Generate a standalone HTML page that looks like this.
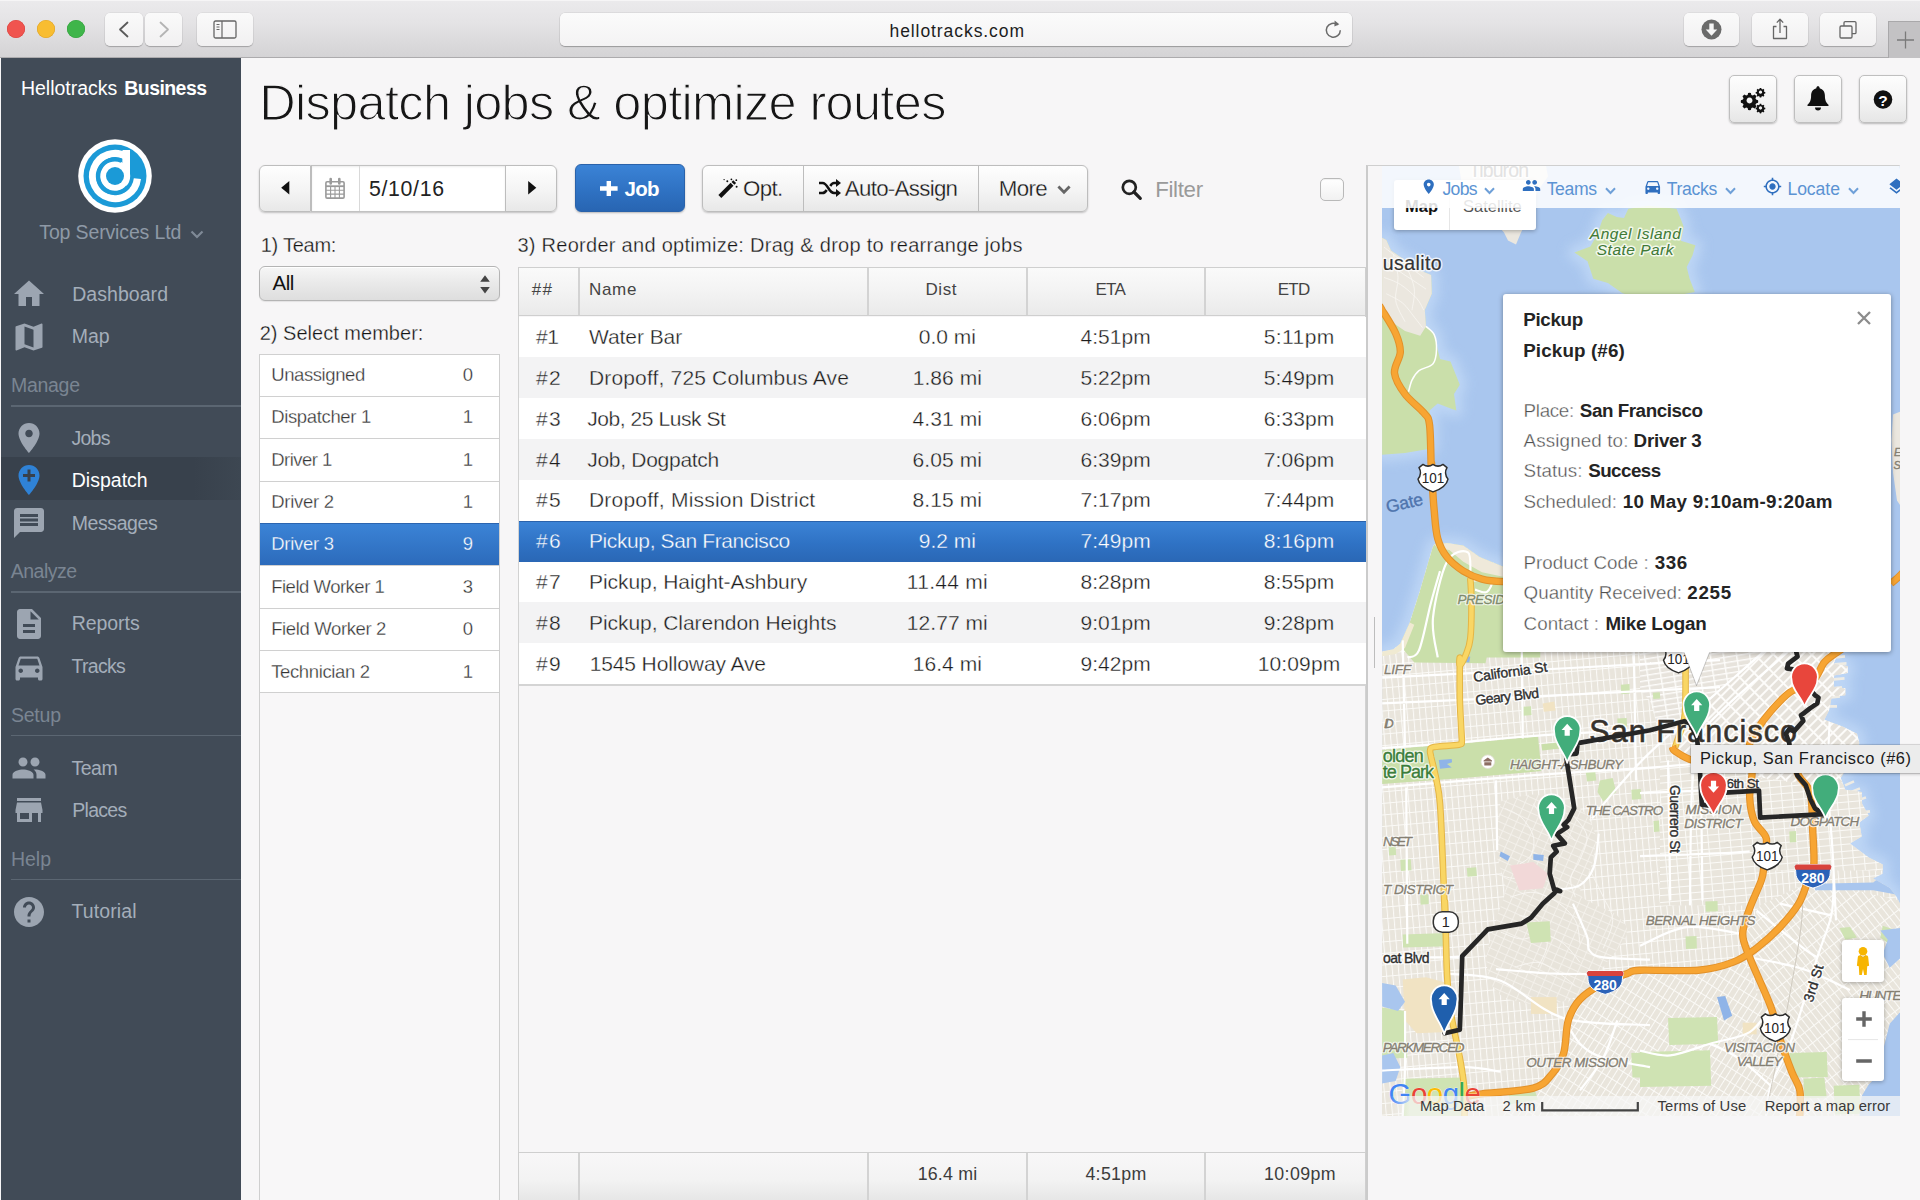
<!DOCTYPE html>
<html lang="en">
<head>
<meta charset="utf-8">
<title>Dispatch jobs &amp; optimize routes</title>
<style>
*{box-sizing:border-box;margin:0;padding:0}
html,body{width:1920px;height:1200px;overflow:hidden}
body{position:relative;background:#f7f6f7;font-family:"Liberation Sans",sans-serif;color:#333}
.abs{position:absolute}
.t{position:absolute;white-space:nowrap;line-height:1}
svg{display:block;overflow:visible}
#chrome{position:absolute;left:0;top:0;width:1920px;height:58px;background:linear-gradient(#ebeaec 0,#e4e3e5 40%,#d4d3d5 100%);border-bottom:1px solid #acabad;border-top:1px solid #f6f5f6}
.dot{position:absolute;top:18.5px;width:18.5px;height:18.5px;border-radius:50%}
.cbtn{position:absolute;top:12px;height:33px;border-radius:5px;background:linear-gradient(#fafafa,#f1f0f1);box-shadow:0 1px 1px rgba(0,0,0,.22),0 0 0 .5px rgba(0,0,0,.08)}
#url{position:absolute;left:560px;top:12px;width:792px;height:33px;border-radius:5px;background:linear-gradient(#fbfbfb,#f4f3f4);box-shadow:0 1px 1px rgba(0,0,0,.25),0 0 0 .5px rgba(0,0,0,.1)}
#plus{position:absolute;left:1888px;top:20px;width:32px;height:37px;background:#c3c2c4;border-left:1px solid #a9a8aa;border-top:1px solid #a9a8aa}
#side{position:absolute;left:1px;top:58px;width:240px;height:1142px;background:#414b57}
#side .ln{position:absolute;left:10px;width:230px;height:1.5px;background:#5b6672}
#side .ic{position:absolute;left:10px;width:36px;height:36px;fill:#9ca5b1}
#act{position:absolute;left:0;top:401px;width:240px;height:42.5px;background:linear-gradient(90deg,#38414c 0,#38414c 80%,#3d4752 100%)}
.btn{position:absolute;background:linear-gradient(#fefefe 0,#f4f4f4 55%,#e8e8e8 100%);border:1px solid #bdbdbd}
.grp{position:absolute;border-radius:6px;box-shadow:0 1px 2px rgba(0,0,0,.22)}
.sq{position:absolute;width:48px;height:48px;border-radius:5px;background:linear-gradient(#fdfdfd 0,#f3f3f3 55%,#e6e6e6 100%);border:1px solid #bfbfbf;box-shadow:0 1px 2px rgba(0,0,0,.25)}
.row{position:absolute;left:518.5px;width:847px;height:40.84px}
.mrow{position:absolute;left:0;width:239px;height:42.35px;border-top:1px solid #d0d0d0;background:#fff}
</style>
</head>
<body>


<div id="chrome">
  <div class="dot" style="left:6.5px;background:#f0544f;box-shadow:inset 0 0 0 .6px #d8433f"></div>
  <div class="dot" style="left:36.8px;background:#f8bd31;box-shadow:inset 0 0 0 .6px #dda228"></div>
  <div class="dot" style="left:66.8px;background:#3fb54a;box-shadow:inset 0 0 0 .6px #33a03c"></div>
  <div class="cbtn" style="left:104.5px;width:38.5px"><svg width="38" height="33" viewBox="0 0 38 33"><path d="M22.5 9.5 L15 16.5 L22.5 23.5" fill="none" stroke="#5a5a5a" stroke-width="1.8" stroke-linecap="round" stroke-linejoin="round"/></svg></div>
  <div class="cbtn" style="left:145px;width:37px"><svg width="37" height="33" viewBox="0 0 37 33"><path d="M15.5 9.5 L23 16.5 L15.5 23.5" fill="none" stroke="#b4b4b4" stroke-width="1.8" stroke-linecap="round" stroke-linejoin="round"/></svg></div>
  <div class="cbtn" style="left:197px;width:56px"><svg width="56" height="33" viewBox="0 0 56 33"><rect x="17" y="8" width="22" height="17" rx="1.5" fill="none" stroke="#666" stroke-width="1.3"/><path d="M25 8v17M19.5 11.5h3M19.5 14h3M19.5 16.5h3" stroke="#666" stroke-width="1.2" fill="none"/></svg></div>
  <div id="url">
    <div class="t" style="left:329.50px;top:10.34px;font-size:17.5px;letter-spacing:0.923px;color:#1d1d1d">hellotracks.com</div>
    <svg class="abs" style="left:762px;top:5px" width="24" height="24" viewBox="0 0 24 24"><path d="M18.3 12.2a7 7 0 1 1-2.6-5.4" fill="none" stroke="#6a6a6a" stroke-width="1.5"/><path d="M12.6 2.6 L17.3 6.2 L12.4 8.6z" fill="#6a6a6a"/></svg>
  </div>
  <div class="cbtn" style="left:1684px;width:55px"><svg width="55" height="33" viewBox="0 0 55 33"><circle cx="27.5" cy="16.5" r="10" fill="#6b6b6b"/><path d="M25.3 10.5h4.4v6h3.6l-5.8 6.2-5.8-6.2h3.6z" fill="#f6f6f6"/></svg></div>
  <div class="cbtn" style="left:1752px;width:56px"><svg width="56" height="33" viewBox="0 0 56 33"><path d="M24.5 13.5h-3v12h13v-12h-3M28 20V6.5M24.8 9.6L28 6.3l3.2 3.3" fill="none" stroke="#666" stroke-width="1.3" stroke-linejoin="round"/></svg></div>
  <div class="cbtn" style="left:1820px;width:56px"><svg width="56" height="33" viewBox="0 0 56 33"><rect x="20" y="13" width="12" height="12" rx="1.2" fill="none" stroke="#666" stroke-width="1.3"/><path d="M24 13v-3.2a1.2 1.2 0 0 1 1.2-1.2h9.600a1.2 1.2 0 0 1 1.2 1.2v9.600a1.2 1.2 0 0 1-1.2 1.2H32" fill="none" stroke="#666" stroke-width="1.3"/></svg></div>
  <div id="plus"><svg width="32" height="36" viewBox="0 0 32 36"><path d="M16.5 9.5v17M8 18h17" stroke="#7a7a7a" stroke-width="1.3" fill="none"/></svg></div>
</div>

<div id="side">
<div class="t" style="left:19.90px;top:20.94px;font-size:19.5px;letter-spacing:-0.005px;color:#fff">Hellotracks</div>
<div class="t" style="left:123.30px;top:20.94px;font-size:19.5px;letter-spacing:-0.572px;color:#fff;font-weight:bold">Business</div>
<svg class="abs" style="left:76.9px;top:81.3px" width="74" height="74" viewBox="-37 -37 74 74">
    <circle r="36.8" fill="#fff"/>
    <circle r="31.5" fill="#1b9ad7"/>
    <path d="M22.41 2.6 A22.5 22.5 0 1 1 11.3 -19.460 L11.3 1" fill="none" stroke="#fff" stroke-width="7.2" stroke-linejoin="miter"/>
    <circle r="15.2" fill="#fff"/>
    <path d="M6.6 -15.2 A16.8 16.8 0 1 0 12.870 10.800" fill="none" stroke="#1b9ad7" stroke-width="4.4"/>
    <path d="M7.500 -26 L15 -26 L15 2 L7.500 2z" fill="#fff"/>
    <circle r="9" fill="#1b9ad7"/>
  </svg>
<div class="t" style="left:38.30px;top:164.64px;font-size:19.5px;letter-spacing:-0.144px;color:#8e99a6">Top Services Ltd</div>
<svg class="abs" style="left:188.5px;top:171.5px" width="14" height="9" viewBox="0 0 14 9"><path d="M1.5 1.5 L7 7 L12.5 1.5" fill="none" stroke="#7f8a97" stroke-width="2.2"/></svg>
<div id="act" style="top:399.0px;height:43.2px"></div>
<div class="t" style="left:10.00px;top:318.14px;font-size:19.5px;letter-spacing:-0.294px;color:#7a8592">Manage</div>
<div class="ln" style="top:347.1px"></div>
<div class="t" style="left:9.70px;top:503.94px;font-size:19.5px;letter-spacing:-0.479px;color:#7a8592">Analyze</div>
<div class="ln" style="top:533.3px"></div>
<div class="t" style="left:10.00px;top:648.14px;font-size:19.5px;letter-spacing:-0.242px;color:#7a8592">Setup</div>
<div class="ln" style="top:676.8px"></div>
<div class="t" style="left:10.00px;top:791.64px;font-size:19.5px;letter-spacing:-0.036px;color:#7a8592">Help</div>
<div class="ln" style="top:820.8px"></div>
<svg class="ic" style="top:218.0px" viewBox="0 0 24 24"><path d="M10 20v-6h4v6h5v-8h3L12 3 2 12h3v8z"/></svg>
<div class="t" style="left:71.20px;top:227.34px;font-size:19.5px;letter-spacing:0.049px;color:#a4aeba">Dashboard</div>
<svg class="ic" style="top:260.5px" viewBox="0 0 24 24"><path d="M20.5 3l-.16.03L15 5.100 9 3 3.360 4.900c-.21.07-.36.25-.36.48V20.500c0 .28.22.5.5.5l.16-.03L9 18.900l6 2.100 5.640-1.900c.21-.07.36-.25.36-.48V3.500c0-.28-.22-.5-.5-.5zM15 19l-6-2.110V5l6 2.110V19z"/></svg>
<div class="t" style="left:70.70px;top:268.94px;font-size:19.5px;letter-spacing:0.031px;color:#a4aeba">Map</div>
<svg class="ic" style="top:362.0px" viewBox="0 0 24 24"><path d="M12 2C8.130 2 5 5.130 5 9c0 5.250 7 13 7 13s7-7.750 7-13c0-3.870-3.130-7-7-7zm0 9.500c-1.380 0-2.500-1.120-2.500-2.500s1.120-2.500 2.500-2.500 2.500 1.120 2.500 2.500-1.120 2.500-2.500 2.500z"/></svg>
<div class="t" style="left:70.40px;top:371.44px;font-size:19.5px;letter-spacing:-0.700px;color:#a4aeba">Jobs</div>
<svg class="ic" style="top:404.3px;fill:#2f82d6" viewBox="0 0 24 24"><path d="M12 2C8.140 2 5 5.140 5 9c0 5.250 7 13 7 13s7-7.750 7-13c0-3.860-3.140-7-7-7zm4 8h-3v3h-2v-3H8V8h3V5h2v3h3v2z"/></svg>
<div class="t" style="left:70.70px;top:413.14px;font-size:19.5px;letter-spacing:0.018px;color:#fff">Dispatch</div>
<svg class="ic" style="top:446.5px" viewBox="0 0 24 24"><path d="M20 2H4c-1.100 0-1.990.9-1.990 2L2 22l4-4h14c1.100 0 2-.9 2-2V4c0-1.100-.9-2-2-2zm-2 12H6v-2h12v2zm0-3H6V9h12v2zm0-3H6V6h12v2z"/></svg>
<div class="t" style="left:70.70px;top:455.64px;font-size:19.5px;letter-spacing:-0.411px;color:#a4aeba">Messages</div>
<svg class="ic" style="top:548.0px" viewBox="0 0 24 24"><path d="M14 2H6c-1.100 0-1.990.9-1.990 2L4 20c0 1.100.89 2 1.990 2H18c1.100 0 2-.9 2-2V8l-6-6zm2 16H8v-2h8v2zm0-4H8v-2h8v2zm-3-5V3.500L18.500 9H13z"/></svg>
<div class="t" style="left:70.70px;top:556.44px;font-size:19.5px;letter-spacing:-0.047px;color:#a4aeba">Reports</div>
<svg class="ic" style="top:590.5px" viewBox="0 0 24 24"><path d="M18.920 6.010C18.720 5.420 18.160 5 17.500 5h-11c-.66 0-1.210.42-1.420 1.010L3 12v8c0 .55.45 1 1 1h1c.55 0 1-.45 1-1v-1h12v1c0 .55.45 1 1 1h1c.55 0 1-.45 1-1v-8l-2.080-5.990zM6.500 16c-.83 0-1.500-.67-1.500-1.500S5.670 13 6.500 13s1.500.67 1.500 1.500S7.330 16 6.500 16zm11 0c-.83 0-1.500-.67-1.500-1.500s.67-1.500 1.500-1.500 1.500.67 1.500 1.500-.67 1.500-1.500 1.500zM5 11l1.500-4.500h11L19 11H5z"/></svg>
<div class="t" style="left:70.50px;top:599.39px;font-size:19.5px;letter-spacing:-0.700px;color:#a4aeba">Tracks</div>
<svg class="ic" style="top:692.0px" viewBox="0 0 24 24"><path d="M16 11c1.660 0 2.990-1.340 2.990-3S17.660 5 16 5c-1.660 0-3 1.340-3 3s1.340 3 3 3zm-8 0c1.660 0 2.990-1.340 2.990-3S9.660 5 8 5C6.340 5 5 6.340 5 8s1.340 3 3 3zm0 2c-2.330 0-7 1.170-7 3.500V19h14v-2.500c0-2.330-4.670-3.500-7-3.500zm8 0c-.29 0-.62.020-.97.050 1.160.84 1.970 1.970 1.970 3.450V19h6v-2.500c0-2.330-4.670-3.500-7-3.500z"/></svg>
<div class="t" style="left:70.50px;top:701.14px;font-size:19.5px;letter-spacing:-0.496px;color:#a4aeba">Team</div>
<svg class="ic" style="top:734.3px" viewBox="0 0 24 24"><path d="M20 4H4v2h16V4zm1 10v-2l-1-5H4l-1 5v2h1v6h10v-6h4v6h2v-6h1zm-9 4H6v-4h6v4z"/></svg>
<div class="t" style="left:71.20px;top:743.14px;font-size:19.5px;letter-spacing:-0.700px;color:#a4aeba">Places</div>
<svg class="ic" style="top:835.5px" viewBox="0 0 24 24"><path d="M12 2C6.480 2 2 6.480 2 12s4.480 10 10 10 10-4.480 10-10S17.520 2 12 2zm1 17h-2v-2h2v2zm2.070-7.750l-.9.920C13.450 12.900 13 13.500 13 15h-2v-.5c0-1.100.45-2.100 1.170-2.830l1.240-1.260c.37-.36.59-.86.590-1.410 0-1.100-.9-2-2-2s-2 .9-2 2H8c0-2.210 1.790-4 4-4s4 1.790 4 4c0 .88-.36 1.680-.93 2.250z"/></svg>
<div class="t" style="left:70.50px;top:844.39px;font-size:19.5px;letter-spacing:0.098px;color:#a4aeba">Tutorial</div>
</div>
<div class="t" style="left:259.20px;top:78.40px;font-size:50.5px;letter-spacing:-0.671px;color:#161616;-webkit-text-stroke:1.25px #f7f6f7">Dispatch jobs &amp; optimize routes</div>
<div class="sq" style="left:1729px;top:75.3px"><svg width="46" height="46" viewBox="0 0 46 46"><g fill="#111"><path id="gbig" d="M0-8.6l1.500.2.600 2.200 1.600.7 2-1.200 2.100 2.100-1.200 2 .7 1.600 2.200.600.200 1.500-.200 1.500-2.200.600-.7 1.600 1.200 2-2.100 2.100-2-1.200-1.600.7-.600 2.200-1.500.200-1.500-.200-.600-2.200-1.600-.7-2 1.200-2.100-2.100 1.200-2-.7-1.600-2.200-.600-.200-1.500.200-1.500 2.200-.600.700-1.600-1.200-2 2.100-2.100 2 1.200 1.600-.7.600-2.200zM0-3.300a3.300 3.300 0 1 0 .01 0z" transform="translate(19.500 24.500) scale(.9)" fill-rule="evenodd"/><path d="M0-8.6l1.500.2.600 2.200 1.600.7 2-1.200 2.100 2.100-1.200 2 .7 1.600 2.200.600.200 1.500-.200 1.500-2.200.600-.7 1.600 1.200 2-2.100 2.100-2-1.200-1.600.7-.600 2.200-1.500.200-1.500-.200-.600-2.200-1.600-.7-2 1.200-2.100-2.100 1.200-2-.7-1.600-2.200-.600-.200-1.500.200-1.500 2.200-.600.700-1.600-1.200-2 2.100-2.100 2 1.200 1.600-.7.600-2.200zM0-3.300a3.300 3.300 0 1 0 .01 0z" transform="translate(30.500 16.200) scale(.5)" fill-rule="evenodd"/><path d="M0-8.6l1.500.2.600 2.200 1.600.7 2-1.200 2.100 2.100-1.200 2 .7 1.600 2.200.600.200 1.500-.200 1.500-2.200.600-.7 1.600 1.200 2-2.100 2.100-2-1.200-1.600.7-.600 2.200-1.500.200-1.500-.200-.600-2.200-1.600-.7-2 1.200-2.100-2.100 1.200-2-.7-1.600-2.200-.600-.200-1.500.200-1.500 2.200-.600.700-1.600-1.200-2 2.100-2.100 2 1.200 1.600-.7.600-2.200zM0-3.300a3.300 3.300 0 1 0 .01 0z" transform="translate(30.500 32) scale(.5)" fill-rule="evenodd"/></g></svg></div>
<div class="sq" style="left:1794px;top:75.3px"><svg width="46" height="46" viewBox="0 0 46 46"><path d="M23 10.200c.9 0 1.600.7 1.600 1.600v.5c3.300.8 5.300 3.600 5.300 7.200 0 4.800 1.300 7.200 3.600 9.200v1.300H12.500v-1.300c2.300-2 3.600-4.400 3.600-9.200 0-3.600 2-6.400 5.300-7.200v-.5c0-.9.700-1.600 1.600-1.600zM20 31.500h6a3 3 0 0 1-6 0z" fill="#111"/></svg></div>
<div class="sq" style="left:1859px;top:75.3px"><svg width="46" height="46" viewBox="0 0 46 46"><circle cx="23" cy="23.500" r="9.300" fill="#111"/></svg><div class="t" style="left:23.00px;top:16.33px;font-size:15.5px;color:#fff;font-weight:bold;transform:translateX(-50%);">?</div></div>
<div class="grp" style="left:259.2px;top:164.7px;width:298.3px;height:47px;background:#fff"></div>
<div class="btn" style="left:259.2px;top:164.7px;width:52.1px;height:47px;border-radius:6px 0 0 6px"></div>
<div class="abs" style="left:310.8px;top:164.7px;width:195.500px;height:47px;background:#fff;border:1px solid #c2c2c2;border-left:1px solid #bdbdbd;box-shadow:inset 0 1px 2px rgba(0,0,0,.08)"></div>
<div class="abs" style="left:358.7px;top:165.7px;width:1px;height:45px;background:#d9d9d9"></div>
<div class="btn" style="left:505.3px;top:164.7px;width:52.2px;height:47px;border-radius:0 6px 6px 0"></div>
<svg class="abs" style="left:281.3px;top:181.4px" width="8.500" height="14" viewBox="0 0 8.500 14"><path d="M8.300 0v13.600L.2 6.800z" fill="#111"/></svg>
<svg class="abs" style="left:527.7px;top:181.4px" width="8.500" height="14" viewBox="0 0 8.500 14"><path d="M.2 0v13.600L8.300 6.800z" fill="#111"/></svg>
<svg class="abs" style="left:325px;top:177.5px" width="20" height="21" viewBox="0 0 20 21"><g fill="none" stroke="#9a9a9a"><rect x=".9" y="3.700" width="18.200" height="16.400" rx="1.200" stroke-width="1.600"/><path d="M1 8.200h18" stroke-width="1.800"/><path d="M1 12.200h18M1 16.100h18M5.600 8.200v12M10 8.200v12M14.400 8.200v12" stroke-width="1.100"/><path d="M5.700 1v4.500M14.300 1v4.500" stroke-width="2.600" stroke-linecap="round"/></g></svg>
<div class="t" style="left:369.00px;top:178.82px;font-size:21.3px;letter-spacing:0.656px;color:#222">5/10/16</div>
<div class="abs" style="left:574.6px;top:164.2px;width:110.1px;height:48.2px;border-radius:6px;background:linear-gradient(#3b83d6 0,#2f72c3 55%,#2865b2 100%);border:1px solid #2a62aa;box-shadow:0 1px 2px rgba(0,0,0,.25)"></div>
<svg class="abs" style="left:600.4px;top:180.800px" width="17.600" height="15" viewBox="0 0 17.600 15"><path d="M6.600 0h4.400v5.300h6.600v4.400H11V15H6.600V9.700H0V5.300h6.600z" fill="#fff"/></svg>
<div class="t" style="left:624.50px;top:179.20px;font-size:20.5px;letter-spacing:-0.700px;color:#fff;font-weight:bold">Job</div>
<div class="grp" style="left:701.7px;top:164.5px;width:386.7px;height:47.5px"></div>
<div class="btn" style="left:701.7px;top:164.5px;width:102px;height:47.5px;border-radius:6px 0 0 6px"></div>
<div class="btn" style="left:802.7px;top:164.5px;width:176.500px;height:47.5px"></div>
<div class="btn" style="left:978.2px;top:164.5px;width:110.2px;height:47.5px;border-radius:0 6px 6px 0"></div>
<svg class="abs" style="left:717.5px;top:177.5px" width="20" height="20" viewBox="0 0 20 20"><g fill="#111"><path d="M.4 17L12.600 4.800l2.900 2.900L3.300 19.900z"/><path d="M13.500 3.900l1.700-1.700 2.900 2.900-1.700 1.700z"/><circle cx="9.300" cy="3.200" r="1"/><circle cx="13.400" cy="1.300" r=".9"/><circle cx="18.300" cy="2.200" r=".9"/><circle cx="18.600" cy="8.700" r="1"/><circle cx="6.100" cy="1.600" r=".7"/></g></svg>
<div class="t" style="left:743.10px;top:177.67px;font-size:22.3px;letter-spacing:-0.700px;color:#141414;-webkit-text-stroke:.3px #f5f5f5">Opt.</div>
<svg class="abs" style="left:819px;top:178.5px" width="22" height="18" viewBox="0 0 22 18"><g fill="none" stroke="#111" stroke-width="2.500"><path d="M0 4h3.500c5.500 0 6 10 11.500 10H18"/><path d="M0 14h3.500c2 0 3.200-1.300 4.200-3M11.300 7c1-1.700 2.200-3 3.700-3H18"/></g><path d="M17 0l5 4-5 4zM17 10l5 4-5 4z" fill="#111"/></svg>
<div class="t" style="left:844.80px;top:177.67px;font-size:22.3px;letter-spacing:-0.700px;color:#141414;-webkit-text-stroke:.3px #f5f5f5">Auto-Assign</div>
<div class="t" style="left:998.70px;top:177.67px;font-size:22.3px;letter-spacing:-0.604px;color:#141414;-webkit-text-stroke:.3px #f5f5f5">More</div>
<svg class="abs" style="left:1056.5px;top:184.5px" width="14" height="10" viewBox="0 0 14 10"><path d="M1.400 1.600L7 7.300l5.600-5.700" fill="none" stroke="#666" stroke-width="2.800"/></svg>
<svg class="abs" style="left:1121px;top:179px" width="21" height="21" viewBox="0 0 21 21"><circle cx="8.300" cy="8.300" r="6.500" fill="none" stroke="#222" stroke-width="2.700"/><path d="M13 13l6.300 6.300" stroke="#222" stroke-width="3.200" stroke-linecap="round"/></svg>
<div class="t" style="left:1155.20px;top:178.57px;font-size:22.3px;letter-spacing:-0.332px;color:#9a9a9a">Filter</div>
<div class="abs" style="left:1320px;top:177.5px;width:23.5px;height:23px;border-radius:5px;border:1px solid #b9b9b9;background:linear-gradient(#fff,#f1f1f1);box-shadow:inset 0 1px 1px rgba(0,0,0,.06)"></div>
<div class="t" style="left:260.70px;top:235.22px;font-size:20px;letter-spacing:-0.250px;color:#141414;-webkit-text-stroke:.3px #f7f6f7">1) Team:</div>
<div class="t" style="left:517.40px;top:235.22px;font-size:20px;letter-spacing:0.278px;color:#141414;-webkit-text-stroke:.3px #f7f6f7">3) Reorder and optimize: Drag &amp; drop to rearrange jobs</div>
<div class="t" style="left:259.70px;top:322.52px;font-size:20px;letter-spacing:0.019px;color:#141414;-webkit-text-stroke:.3px #f7f6f7">2) Select member:</div>
<div class="abs" style="left:259px;top:266px;width:240.600px;height:35px;border-radius:6px;border:1px solid #b4b4b4;background:linear-gradient(#f6f6f6 0,#e9e9e9 50%,#dedede 100%);box-shadow:inset 0 1px 0 #fff,0 1px 1px rgba(0,0,0,.08)"></div>
<div class="t" style="left:272.50px;top:273.40px;font-size:20.5px;letter-spacing:-0.498px;color:#111">All</div>
<svg class="abs" style="left:479.5px;top:274.5px" width="10" height="19" viewBox="0 0 10 19"><path d="M5 .3l4.800 6.500H.2zM5 18.500l4.800-6.500H.2z" fill="#444"/></svg>
<div class="abs" style="left:259.2px;top:353.6px;width:240.5px;height:860px;border:1px solid #cfcfcf;border-bottom:0;background:#f8f7f8"></div>
<div class="abs" style="left:260.2px;top:353.6px;width:238.5px;height:340px">
<div class="mrow" style="top:0.00px;"></div>
<div class="mrow" style="top:42.36px;"></div>
<div class="mrow" style="top:84.72px;"></div>
<div class="mrow" style="top:127.08px;"></div>
<div class="mrow" style="top:169.44px;background:linear-gradient(#3b83d6,#2c6bbb);border-top-color:#2b65b0;"></div>
<div class="mrow" style="top:211.80px;"></div>
<div class="mrow" style="top:254.16px;"></div>
<div class="mrow" style="top:296.52px;"></div>
<div class="mrow" style="top:338.88px;height:1px"></div>
</div>
<div class="t" style="left:271.20px;top:365.99px;font-size:18.5px;letter-spacing:-0.411px;color:#333;-webkit-text-stroke:.3px #fff">Unassigned</div>
<div class="t" style="left:467.80px;top:365.99px;font-size:18.5px;color:#333;transform:translateX(-50%);-webkit-text-stroke:.3px #fff">0</div>
<div class="t" style="left:271.20px;top:408.35px;font-size:18.5px;letter-spacing:-0.351px;color:#333;-webkit-text-stroke:.3px #fff">Dispatcher 1</div>
<div class="t" style="left:467.80px;top:408.35px;font-size:18.5px;color:#333;transform:translateX(-50%);-webkit-text-stroke:.3px #fff">1</div>
<div class="t" style="left:271.20px;top:450.71px;font-size:18.5px;letter-spacing:-0.538px;color:#333;-webkit-text-stroke:.3px #fff">Driver 1</div>
<div class="t" style="left:467.80px;top:450.71px;font-size:18.5px;color:#333;transform:translateX(-50%);-webkit-text-stroke:.3px #fff">1</div>
<div class="t" style="left:271.20px;top:493.07px;font-size:18.5px;letter-spacing:-0.267px;color:#333;-webkit-text-stroke:.3px #fff">Driver 2</div>
<div class="t" style="left:467.80px;top:493.07px;font-size:18.5px;color:#333;transform:translateX(-50%);-webkit-text-stroke:.3px #fff">1</div>
<div class="t" style="left:271.20px;top:535.43px;font-size:18.5px;letter-spacing:-0.267px;color:#fff;-webkit-text-stroke:.3px #3377c9">Driver 3</div>
<div class="t" style="left:467.80px;top:535.43px;font-size:18.5px;color:#fff;transform:translateX(-50%);-webkit-text-stroke:.3px #3377c9">9</div>
<div class="t" style="left:271.20px;top:577.79px;font-size:18.5px;letter-spacing:-0.489px;color:#333;-webkit-text-stroke:.3px #fff">Field Worker 1</div>
<div class="t" style="left:467.80px;top:577.79px;font-size:18.5px;color:#333;transform:translateX(-50%);-webkit-text-stroke:.3px #fff">3</div>
<div class="t" style="left:271.20px;top:620.15px;font-size:18.5px;letter-spacing:-0.366px;color:#333;-webkit-text-stroke:.3px #fff">Field Worker 2</div>
<div class="t" style="left:467.80px;top:620.15px;font-size:18.5px;color:#333;transform:translateX(-50%);-webkit-text-stroke:.3px #fff">0</div>
<div class="t" style="left:271.20px;top:662.51px;font-size:18.5px;letter-spacing:-0.368px;color:#333;-webkit-text-stroke:.3px #fff">Technician 2</div>
<div class="t" style="left:467.80px;top:662.51px;font-size:18.5px;color:#333;transform:translateX(-50%);-webkit-text-stroke:.3px #fff">1</div>
<div class="abs" style="left:517.5px;top:266.75px;width:848.5px;height:940px;border:1px solid #d2d2d2;border-bottom:0"></div>
<div class="abs" style="left:517.5px;top:266.75px;width:848.5px;height:49.25px;border:1px solid #cfcfcf;background:linear-gradient(#fafafa 0,#f3f3f3 50%,#eaeaea 100%)"></div>
<div class="abs" style="left:578.00px;top:267.75px;width:1.5px;height:47.5px;background:#d3d3d3"></div>
<div class="abs" style="left:867.25px;top:267.75px;width:1.5px;height:47.5px;background:#d3d3d3"></div>
<div class="abs" style="left:1026.00px;top:267.75px;width:1.5px;height:47.5px;background:#d3d3d3"></div>
<div class="abs" style="left:1204.25px;top:267.75px;width:1.5px;height:47.5px;background:#d3d3d3"></div>
<div class="t" style="left:531.70px;top:281.26px;font-size:17px;letter-spacing:1.300px;color:#444">##</div>
<div class="t" style="left:588.95px;top:281.26px;font-size:17px;letter-spacing:0.714px;color:#444">Name</div>
<div class="t" style="left:925.45px;top:281.26px;font-size:17px;letter-spacing:0.573px;color:#444">Dist</div>
<div class="t" style="left:1095.45px;top:281.26px;font-size:17px;letter-spacing:-0.700px;color:#444">ETA</div>
<div class="t" style="left:1277.70px;top:281.26px;font-size:17px;letter-spacing:-0.700px;color:#444">ETD</div>
<div class="row" style="top:316.60px;background:#fff"></div>
<div class="row" style="top:357.44px;background:#f3f3f4"></div>
<div class="row" style="top:398.28px;background:#fff"></div>
<div class="row" style="top:439.12px;background:#f3f3f4"></div>
<div class="row" style="top:479.96px;background:#fff"></div>
<div class="row" style="top:520.80px;background:linear-gradient(#3b83d6 0,#2f72c4 55%,#2a67b5 100%);border-top:1px solid #2a62ab"></div>
<div class="row" style="top:561.64px;background:#fff"></div>
<div class="row" style="top:602.48px;background:#f3f3f4"></div>
<div class="row" style="top:643.32px;background:#fff"></div>
<div class="abs" style="left:518.5px;top:684.4px;width:847px;height:1.3px;background:#d4d4d4"></div>
<div class="t" style="left:536.05px;top:326.12px;font-size:21px;letter-spacing:-0.359px;color:#1c1c1c;-webkit-text-stroke:.33px #fff">#1</div>
<div class="t" style="left:588.95px;top:326.12px;font-size:21px;letter-spacing:-0.062px;color:#1c1c1c;-webkit-text-stroke:.33px #fff">Water Bar</div>
<div class="t" style="left:947.30px;top:326.12px;font-size:21px;color:#1c1c1c;transform:translateX(-50%);-webkit-text-stroke:.33px #fff">0.0 mi</div>
<div class="t" style="left:1115.63px;top:326.12px;font-size:21px;letter-spacing:0.051px;color:#1c1c1c;transform:translateX(-50%);-webkit-text-stroke:.33px #fff">4:51pm</div>
<div class="t" style="left:1299.21px;top:326.12px;font-size:21px;letter-spacing:0.420px;color:#1c1c1c;transform:translateX(-50%);-webkit-text-stroke:.33px #fff">5:11pm</div>
<div class="t" style="left:536.05px;top:366.96px;font-size:21px;letter-spacing:1.300px;color:#1c1c1c;-webkit-text-stroke:.33px #f3f3f4">#2</div>
<div class="t" style="left:588.95px;top:366.96px;font-size:21px;letter-spacing:0.164px;color:#1c1c1c;-webkit-text-stroke:.33px #f3f3f4">Dropoff, 725 Columbus Ave</div>
<div class="t" style="left:947.34px;top:366.96px;font-size:21px;letter-spacing:0.071px;color:#1c1c1c;transform:translateX(-50%);-webkit-text-stroke:.33px #f3f3f4">1.86 mi</div>
<div class="t" style="left:1115.63px;top:366.96px;font-size:21px;letter-spacing:0.051px;color:#1c1c1c;transform:translateX(-50%);-webkit-text-stroke:.33px #f3f3f4">5:22pm</div>
<div class="t" style="left:1299.06px;top:366.96px;font-size:21px;letter-spacing:0.111px;color:#1c1c1c;transform:translateX(-50%);-webkit-text-stroke:.33px #f3f3f4">5:49pm</div>
<div class="t" style="left:536.05px;top:407.80px;font-size:21px;letter-spacing:1.300px;color:#1c1c1c;-webkit-text-stroke:.33px #fff">#3</div>
<div class="t" style="left:587.20px;top:407.80px;font-size:21px;letter-spacing:-0.430px;color:#1c1c1c;-webkit-text-stroke:.33px #fff">Job, 25 Lusk St</div>
<div class="t" style="left:947.35px;top:407.80px;font-size:21px;letter-spacing:0.104px;color:#1c1c1c;transform:translateX(-50%);-webkit-text-stroke:.33px #fff">4.31 mi</div>
<div class="t" style="left:1115.63px;top:407.80px;font-size:21px;letter-spacing:0.051px;color:#1c1c1c;transform:translateX(-50%);-webkit-text-stroke:.33px #fff">6:06pm</div>
<div class="t" style="left:1299.06px;top:407.80px;font-size:21px;letter-spacing:0.111px;color:#1c1c1c;transform:translateX(-50%);-webkit-text-stroke:.33px #fff">6:33pm</div>
<div class="t" style="left:536.05px;top:448.64px;font-size:21px;letter-spacing:1.300px;color:#1c1c1c;-webkit-text-stroke:.33px #f3f3f4">#4</div>
<div class="t" style="left:587.20px;top:448.64px;font-size:21px;letter-spacing:-0.282px;color:#1c1c1c;-webkit-text-stroke:.33px #f3f3f4">Job, Dogpatch</div>
<div class="t" style="left:947.35px;top:448.64px;font-size:21px;letter-spacing:0.104px;color:#1c1c1c;transform:translateX(-50%);-webkit-text-stroke:.33px #f3f3f4">6.05 mi</div>
<div class="t" style="left:1115.63px;top:448.64px;font-size:21px;letter-spacing:0.051px;color:#1c1c1c;transform:translateX(-50%);-webkit-text-stroke:.33px #f3f3f4">6:39pm</div>
<div class="t" style="left:1299.06px;top:448.64px;font-size:21px;letter-spacing:0.111px;color:#1c1c1c;transform:translateX(-50%);-webkit-text-stroke:.33px #f3f3f4">7:06pm</div>
<div class="t" style="left:536.05px;top:489.48px;font-size:21px;letter-spacing:1.300px;color:#1c1c1c;-webkit-text-stroke:.33px #fff">#5</div>
<div class="t" style="left:588.95px;top:489.48px;font-size:21px;letter-spacing:0.204px;color:#1c1c1c;-webkit-text-stroke:.33px #fff">Dropoff, Mission District</div>
<div class="t" style="left:947.35px;top:489.48px;font-size:21px;letter-spacing:0.104px;color:#1c1c1c;transform:translateX(-50%);-webkit-text-stroke:.33px #fff">8.15 mi</div>
<div class="t" style="left:1115.63px;top:489.48px;font-size:21px;letter-spacing:0.051px;color:#1c1c1c;transform:translateX(-50%);-webkit-text-stroke:.33px #fff">7:17pm</div>
<div class="t" style="left:1299.06px;top:489.48px;font-size:21px;letter-spacing:0.111px;color:#1c1c1c;transform:translateX(-50%);-webkit-text-stroke:.33px #fff">7:44pm</div>
<div class="t" style="left:536.05px;top:530.32px;font-size:21px;letter-spacing:1.300px;color:#fff;-webkit-text-stroke:.33px #2f72c4">#6</div>
<div class="t" style="left:588.95px;top:530.32px;font-size:21px;letter-spacing:-0.384px;color:#fff;-webkit-text-stroke:.33px #2f72c4">Pickup, San Francisco</div>
<div class="t" style="left:947.30px;top:530.32px;font-size:21px;color:#fff;transform:translateX(-50%);-webkit-text-stroke:.33px #2f72c4">9.2 mi</div>
<div class="t" style="left:1115.63px;top:530.32px;font-size:21px;letter-spacing:0.051px;color:#fff;transform:translateX(-50%);-webkit-text-stroke:.33px #2f72c4">7:49pm</div>
<div class="t" style="left:1299.06px;top:530.32px;font-size:21px;letter-spacing:0.111px;color:#fff;transform:translateX(-50%);-webkit-text-stroke:.33px #2f72c4">8:16pm</div>
<div class="t" style="left:536.05px;top:571.16px;font-size:21px;letter-spacing:1.300px;color:#1c1c1c;-webkit-text-stroke:.33px #fff">#7</div>
<div class="t" style="left:588.95px;top:571.16px;font-size:21px;letter-spacing:-0.057px;color:#1c1c1c;-webkit-text-stroke:.33px #fff">Pickup, Haight-Ashbury</div>
<div class="t" style="left:947.44px;top:571.16px;font-size:21px;letter-spacing:0.286px;color:#1c1c1c;transform:translateX(-50%);-webkit-text-stroke:.33px #fff">11.44 mi</div>
<div class="t" style="left:1115.63px;top:571.16px;font-size:21px;letter-spacing:0.051px;color:#1c1c1c;transform:translateX(-50%);-webkit-text-stroke:.33px #fff">8:28pm</div>
<div class="t" style="left:1299.06px;top:571.16px;font-size:21px;letter-spacing:0.111px;color:#1c1c1c;transform:translateX(-50%);-webkit-text-stroke:.33px #fff">8:55pm</div>
<div class="t" style="left:536.05px;top:612.00px;font-size:21px;letter-spacing:1.300px;color:#1c1c1c;-webkit-text-stroke:.33px #f3f3f4">#8</div>
<div class="t" style="left:588.95px;top:612.00px;font-size:21px;letter-spacing:-0.048px;color:#1c1c1c;-webkit-text-stroke:.33px #f3f3f4">Pickup, Clarendon Heights</div>
<div class="t" style="left:947.33px;top:612.00px;font-size:21px;letter-spacing:0.065px;color:#1c1c1c;transform:translateX(-50%);-webkit-text-stroke:.33px #f3f3f4">12.77 mi</div>
<div class="t" style="left:1115.63px;top:612.00px;font-size:21px;letter-spacing:0.051px;color:#1c1c1c;transform:translateX(-50%);-webkit-text-stroke:.33px #f3f3f4">9:01pm</div>
<div class="t" style="left:1299.06px;top:612.00px;font-size:21px;letter-spacing:0.111px;color:#1c1c1c;transform:translateX(-50%);-webkit-text-stroke:.33px #f3f3f4">9:28pm</div>
<div class="t" style="left:536.05px;top:652.84px;font-size:21px;letter-spacing:1.300px;color:#1c1c1c;-webkit-text-stroke:.33px #fff">#9</div>
<div class="t" style="left:589.70px;top:652.84px;font-size:21px;letter-spacing:-0.124px;color:#1c1c1c;-webkit-text-stroke:.33px #fff">1545 Holloway Ave</div>
<div class="t" style="left:947.34px;top:652.84px;font-size:21px;letter-spacing:0.071px;color:#1c1c1c;transform:translateX(-50%);-webkit-text-stroke:.33px #fff">16.4 mi</div>
<div class="t" style="left:1115.63px;top:652.84px;font-size:21px;letter-spacing:0.051px;color:#1c1c1c;transform:translateX(-50%);-webkit-text-stroke:.33px #fff">9:42pm</div>
<div class="t" style="left:1299.06px;top:652.84px;font-size:21px;letter-spacing:0.128px;color:#1c1c1c;transform:translateX(-50%);-webkit-text-stroke:.33px #fff">10:09pm</div>
<div class="abs" style="left:517.5px;top:1152px;width:848.5px;height:60px;border:1px solid #cfcfcf;background:linear-gradient(#f8f7f8 0,#f3f3f3 45%,#e7e7e7 80%)"></div>
<div class="abs" style="left:578.00px;top:1153px;width:1.5px;height:47px;background:#d3d3d3"></div>
<div class="abs" style="left:867.25px;top:1153px;width:1.5px;height:47px;background:#d3d3d3"></div>
<div class="abs" style="left:1026.00px;top:1153px;width:1.5px;height:47px;background:#d3d3d3"></div>
<div class="abs" style="left:1204.25px;top:1153px;width:1.5px;height:47px;background:#d3d3d3"></div>
<div class="t" style="left:917.70px;top:1165.58px;font-size:17.8px;letter-spacing:0.198px;color:#3c3c3c">16.4 mi</div>
<div class="t" style="left:1085.40px;top:1165.58px;font-size:17.8px;letter-spacing:0.338px;color:#3c3c3c">4:51pm</div>
<div class="t" style="left:1263.90px;top:1165.58px;font-size:17.8px;letter-spacing:0.433px;color:#3c3c3c">10:09pm</div>
<div class="abs" style="left:1366.2px;top:164.6px;width:2px;height:1040px;background:#cbcbcb"></div>
<div class="abs" style="left:1373.6px;top:617px;width:1.8px;height:51px;background:#bdbdbd"></div>
<div class="abs" style="left:1382.0px;top:164.6px;width:518.0px;height:951.2px;overflow:hidden;background:#a9c6ee;border-top-right-radius:4px">
<svg class="abs" style="left:0;top:0;font-family:'Liberation Sans',sans-serif" width="518.0" height="951.2" viewBox="1382.0 164.6 518.0 951.2">
<defs>
<pattern id="g1" width="6.200" height="11.500" patternUnits="userSpaceOnUse" patternTransform="rotate(-5)"><rect width="6.200" height="11.500" fill="#e9e5dc"/><path d="M0 .5h6.200M.5 0v11.500" stroke="#fbfaf7" stroke-width="1.100"/></pattern>
<pattern id="g2" width="11" height="7" patternUnits="userSpaceOnUse" patternTransform="rotate(-5)"><rect width="11" height="7" fill="#e9e5dc"/><path d="M0 .5h11M.5 0v7" stroke="#fbfaf7" stroke-width="1.100"/></pattern>
<pattern id="g3" width="13.400" height="7" patternUnits="userSpaceOnUse" patternTransform="rotate(-45)"><rect width="13.400" height="7" fill="#e6e2db"/><path d="M0 1h13.400M1 0v7" stroke="#fdfcfa" stroke-width="2"/></pattern>
<pattern id="g4" width="6" height="12" patternUnits="userSpaceOnUse" patternTransform="rotate(32)"><rect width="6" height="12" fill="#e9e5dc"/><path d="M0 .5h6M.5 0v12" stroke="#fbfaf7" stroke-width="1"/></pattern>
<pattern id="g5" width="6" height="13" patternUnits="userSpaceOnUse" patternTransform="rotate(-38)"><rect width="6" height="13" fill="#e9e5dc"/><path d="M0 .5h6M.5 0v13" stroke="#fbfaf7" stroke-width="1"/></pattern>
<pattern id="g6" width="13" height="5.400" patternUnits="userSpaceOnUse" patternTransform="rotate(-9)"><rect width="13" height="5.400" fill="#e7e3dc"/><path d="M0 .7h13M.7 0v5.400" stroke="#fdfcfa" stroke-width="1.500"/></pattern>
<pattern id="g7" width="9" height="7" patternUnits="userSpaceOnUse" patternTransform="rotate(24)"><rect width="9" height="7" fill="#e8e4db"/><path d="M0 .5h9M.5 0v7" stroke="#f4f2ec" stroke-width=".9"/></pattern>
<filter id="bl" x="-20%" y="-20%" width="140%" height="140%"><feGaussianBlur stdDeviation="6"/></filter>
</defs>
<g filter="url(#bl)" fill="#c4dbf8" stroke="#c4dbf8" stroke-width="14" stroke-linejoin="round" opacity=".75"><path d="M1382.1 237.3 L1386.3 239.7 L1391.0 250.2 L1420.2 270.0 L1431.1 274.7 L1431.8 293.3 L1424.8 309.7 L1426.0 326.0 L1434.2 333.0 L1437.7 349.3 L1440.0 358.7 L1450.5 361.0 L1459.8 384.3 L1454.0 393.7 L1456.3 410.0 L1449.3 407.7 L1437.7 403.0 L1429.5 410.0 L1431.8 424.0 L1431.4 447.3 L1428.3 448.7 L1405.0 452.5 L1382.1 454.3Z"/><path d="M1574.4 252.1 L1590.4 246.2 L1597.7 233.1 L1602.1 220.0 L1607.9 212.7 L1616.7 216.5 L1624.0 217.7 L1628.3 208.3 L1648.7 205.4 L1676.5 208.3 L1680.8 218.5 L1683.7 226.4 L1680.8 240.4 L1695.4 244.8 L1692.5 255.0 L1686.7 266.7 L1689.6 278.3 L1694.8 291.5 L1680.8 294.4 L1651.7 301.7 L1622.5 292.9 L1607.9 282.7 L1593.3 278.3 L1590.4 269.6 L1587.5 260.8Z"/><path d="M1382.0 1116.0 L1382.1 651.2 L1393.3 648.8 L1400.3 643.0 L1409.7 622.0 L1420.2 589.3 L1428.3 561.3 L1432.5 547.3 L1434.2 543.8 L1447.0 542.7 L1463.3 545.0 L1479.7 556.7 L1503.0 566.0 L1530.0 570.0 L1580.0 566.0 L1640.0 556.0 L1700.0 548.0 L1760.0 560.0 L1800.0 590.0 L1826.0 630.0 L1838.3 651.7 L1833.7 663.3 L1847.7 665.7 L1847.7 672.7 L1834.1 675.0 L1833.7 686.7 L1845.3 687.8 L1845.3 694.8 L1831.8 696.0 L1829.0 710.0 L1824.3 719.3 L1843.0 726.3 L1857.0 733.3 L1859.3 742.7 L1857.0 756.7 L1847.7 766.0 L1840.7 777.7 L1845.3 789.3 L1861.7 791.7 L1862.1 803.3 L1868.7 815.0 L1859.3 822.0 L1861.7 836.0 L1850.0 843.0 L1859.3 850.0 L1868.7 857.0 L1882.7 864.0 L1882.7 873.3 L1873.3 878.0 L1889.7 887.3 L1896.7 896.7 L1900.2 903.7 L1900.0 904.0 L1900.0 1116.0Z"/></g>
<path d="M1382.1 237.3 L1386.3 239.7 L1391.0 250.2 L1420.2 270.0 L1431.1 274.7 L1431.8 293.3 L1424.8 309.7 L1426.0 326.0 L1434.2 333.0 L1437.7 349.3 L1440.0 358.7 L1450.5 361.0 L1459.8 384.3 L1454.0 393.7 L1456.3 410.0 L1449.3 407.7 L1437.7 403.0 L1429.5 410.0 L1431.8 424.0 L1431.4 447.3 L1428.3 448.7 L1405.0 452.5 L1382.1 454.3Z" fill="#cadfaa"/>
<path d="M1382.1 237.3 L1386.3 239.7 L1391.0 250.2 L1420.2 270.0 L1431.1 274.7 L1431.8 293.3 L1424.8 309.7 L1426.0 326.0 L1420.2 335.3 L1405.0 330.7 L1393.3 322.5 L1382.1 312.0Z" fill="#ebe7df"/>
<path d="M1384.0 258.3 C1386.3 260.3 1393.3 266.5 1398.0 270.0 C1402.7 273.5 1407.3 276.2 1412.0 279.3 C1416.7 282.4 1423.7 287.1 1426.0 288.7 M1384.0 277.0 C1386.7 278.2 1394.9 280.5 1400.3 284.0 C1405.8 287.5 1412.8 293.7 1416.7 298.0 C1420.6 302.3 1422.5 307.7 1423.7 309.7 M1386.3 293.3 C1389.1 294.9 1398.0 298.8 1402.7 302.7 C1407.3 306.6 1411.0 312.6 1414.3 316.7 C1417.6 320.8 1421.1 325.4 1422.5 327.2 M1393.3 253.7 C1394.1 257.6 1397.6 269.2 1398.0 277.0 C1398.4 284.8 1394.5 292.9 1395.7 300.3 C1396.8 307.7 1403.4 317.8 1405.0 321.3 M1407.3 267.7 C1408.5 271.2 1413.6 281.7 1414.3 288.7 C1415.1 295.7 1412.4 306.2 1412.0 309.7 M1384.0 246.7 C1387.5 249.4 1398.4 257.9 1405.0 263.0 C1411.6 268.1 1420.6 274.7 1423.7 277.0" fill="none" stroke="#f7f5f0" stroke-width=".9"/>
<path d="M1426.0 326.0 C1427.4 327.4 1432.4 330.3 1434.2 334.2 C1435.9 338.1 1436.7 344.5 1436.5 349.3 C1436.3 354.2 1435.9 359.8 1433.0 363.3 C1430.1 366.8 1422.5 367.6 1419.0 370.3 C1415.5 373.1 1413.8 376.2 1412.0 379.7 C1410.3 383.2 1409.1 389.4 1408.5 391.3" fill="none" stroke="#fff" stroke-width="1.500"/>
<path d="M1574.4 252.1 L1590.4 246.2 L1597.7 233.1 L1602.1 220.0 L1607.9 212.7 L1616.7 216.5 L1624.0 217.7 L1628.3 208.3 L1648.7 205.4 L1676.5 208.3 L1680.8 218.5 L1683.7 226.4 L1680.8 240.4 L1695.4 244.8 L1692.5 255.0 L1686.7 266.7 L1689.6 278.3 L1694.8 291.5 L1680.8 294.4 L1651.7 301.7 L1622.5 292.9 L1607.9 282.7 L1593.3 278.3 L1590.4 269.6 L1587.5 260.8Z" fill="#cadfaa"/>
<path d="M1893 414 L1901 411 L1901 506 L1897 500 L1893 472 L1891.500 440Z" fill="#ebe7df"/>
<path d="M1458 160 L1545 160 L1548 176 L1538 190 L1530 214 L1521 232 L1516 244 L1508 240 L1504 232 L1480 205 L1462 184Z" fill="#ebe7df"/>
<path d="M1382.0 1116.0 L1382.1 651.2 L1393.3 648.8 L1400.3 643.0 L1409.7 622.0 L1420.2 589.3 L1428.3 561.3 L1432.5 547.3 L1434.2 543.8 L1447.0 542.7 L1463.3 545.0 L1479.7 556.7 L1503.0 566.0 L1530.0 570.0 L1580.0 566.0 L1640.0 556.0 L1700.0 548.0 L1760.0 560.0 L1800.0 590.0 L1826.0 630.0 L1838.3 651.7 L1833.7 663.3 L1847.7 665.7 L1847.7 672.7 L1834.1 675.0 L1833.7 686.7 L1845.3 687.8 L1845.3 694.8 L1831.8 696.0 L1829.0 710.0 L1824.3 719.3 L1843.0 726.3 L1857.0 733.3 L1859.3 742.7 L1857.0 756.7 L1847.7 766.0 L1840.7 777.7 L1845.3 789.3 L1861.7 791.7 L1862.1 803.3 L1868.7 815.0 L1859.3 822.0 L1861.7 836.0 L1850.0 843.0 L1859.3 850.0 L1868.7 857.0 L1882.7 864.0 L1882.7 873.3 L1873.3 878.0 L1889.7 887.3 L1896.7 896.7 L1900.2 903.7 L1900.0 904.0 L1900.0 1116.0Z" fill="url(#g1)"/>
<path d="M1835.0 657.0 l10.0 -1.0M1834.5 664.0 l12.0 -1.0M1834.0 671.0 l9.0 -1.0M1833.5 679.0 l11.0 -1.0M1832.0 688.0 l10.0 -1.0M1831.0 697.0 l9.0 -1.0M1828.0 706.0 l9.0 0.0M1845.0 785.0 l9.0 -4.0M1850.0 792.0 l10.0 -4.0M1858.0 800.0 l8.0 -3.0M1862.0 812.0 l8.0 -1.0" stroke="#efece4" stroke-width="2.600" fill="none"/>
<clipPath id="cl"><path d="M1382.0 1116.0 L1382.1 651.2 L1393.3 648.8 L1400.3 643.0 L1409.7 622.0 L1420.2 589.3 L1428.3 561.3 L1432.5 547.3 L1434.2 543.8 L1447.0 542.7 L1463.3 545.0 L1479.7 556.7 L1503.0 566.0 L1530.0 570.0 L1580.0 566.0 L1640.0 556.0 L1700.0 548.0 L1760.0 560.0 L1800.0 590.0 L1826.0 630.0 L1838.3 651.7 L1833.7 663.3 L1847.7 665.7 L1847.7 672.7 L1834.1 675.0 L1833.7 686.7 L1845.3 687.8 L1845.3 694.8 L1831.8 696.0 L1829.0 710.0 L1824.3 719.3 L1843.0 726.3 L1857.0 733.3 L1859.3 742.7 L1857.0 756.7 L1847.7 766.0 L1840.7 777.7 L1845.3 789.3 L1861.7 791.7 L1862.1 803.3 L1868.7 815.0 L1859.3 822.0 L1861.7 836.0 L1850.0 843.0 L1859.3 850.0 L1868.7 857.0 L1882.7 864.0 L1882.7 873.3 L1873.3 878.0 L1889.7 887.3 L1896.7 896.7 L1900.2 903.7 L1900.0 904.0 L1900.0 1116.0Z"/></clipPath>
<g clip-path="url(#cl)">
<path d="M1640.0 560.0 L1800.0 560.0 L1800.0 618.0 L1765.0 650.0 L1712.7 696.0 L1675.0 730.0 L1660.0 735.0 L1650.0 700.0 L1640.0 690.0Z" fill="url(#g6)"/>
<path d="M1800.0 618.0 L1900.0 618.0 L1900.0 782.0 L1800.0 782.0 L1752.0 776.0 L1750.0 750.0 L1722.0 757.0 L1693.0 760.0 L1672.0 746.0 L1675.0 730.0 L1712.7 696.0 L1765.0 650.0Z" fill="url(#g3)"/>
<path d="M1660.0 760.0 L1693.0 761.0 L1722.0 758.0 L1750.0 751.0 L1752.0 777.0 L1800.0 783.0 L1900.0 783.0 L1900.0 870.0 L1760.0 870.0 L1752.0 905.0 L1660.0 905.0Z" fill="url(#g2)"/>
<path d="M1570.0 985.0 L1640.0 972.0 L1745.0 962.0 L1790.0 1075.0 L1800.0 1116.0 L1500.0 1116.0 L1552.0 1075.0 L1565.0 1050.0Z" fill="url(#g4)"/>
<path d="M1760.0 905.0 L1812.0 880.0 L1900.0 900.0 L1900.0 1010.0 L1860.0 1110.0 L1800.0 1116.0 L1790.0 1070.0 L1750.0 960.0 L1743.0 935.0Z" fill="url(#g5)"/>
<path d="M1500.7 801.0 C1506.1 799.8 1524.0 794.0 1533.3 794.0 C1542.7 794.0 1548.9 798.7 1556.7 801.0 C1564.4 803.3 1573.6 802.6 1580.0 808.0 C1586.4 813.4 1593.2 824.3 1595.2 833.7 C1597.1 843.0 1594.2 854.3 1591.7 864.0 C1589.1 873.7 1579.6 885.4 1580.0 892.0 C1580.4 898.6 1587.8 899.8 1594.0 903.7 C1600.2 907.6 1611.9 910.3 1617.3 915.3 C1622.8 920.4 1629.0 925.4 1626.7 934.0 C1624.3 942.6 1609.9 957.3 1603.3 966.7 C1596.7 976.0 1596.3 983.8 1587.0 990.0 C1577.7 996.2 1561.7 1003.2 1547.3 1004.0 C1532.9 1004.8 1510.8 1001.7 1500.7 994.7 C1490.6 987.7 1487.4 974.4 1486.7 962.0 C1485.9 949.6 1492.9 932.4 1496.0 920.0 C1499.1 907.6 1505.3 899.0 1505.3 887.3 C1505.3 875.7 1496.8 864.4 1496.0 850.0 C1495.2 835.6 1499.9 809.2 1500.7 801.0" fill="url(#g7)"/>
<path d="M1505.3 808.0 C1508.1 809.6 1517.0 812.7 1521.7 817.3 C1526.3 822.0 1531.8 829.8 1533.3 836.0 C1534.9 842.2 1533.3 850.0 1531.0 854.7 C1528.7 859.3 1521.3 862.4 1519.3 864.0 M1510.0 896.7 C1513.9 895.9 1525.6 891.2 1533.3 892.0 C1541.1 892.8 1549.7 896.7 1556.7 901.3 C1563.7 906.0 1571.4 913.0 1575.3 920.0 C1579.2 927.0 1579.2 939.4 1580.0 943.3 M1575.3 817.3 C1577.3 820.4 1586.2 829.0 1587.0 836.0 C1587.8 843.0 1582.7 852.3 1580.0 859.3 C1577.3 866.3 1571.4 871.8 1570.7 878.0 C1569.9 884.2 1574.6 893.6 1575.3 896.7 M1500.7 931.7 C1504.2 932.8 1514.7 938.3 1521.7 938.7 C1528.7 939.1 1535.7 933.2 1542.7 934.0 C1549.7 934.8 1557.4 938.7 1563.7 943.3 C1569.9 948.0 1577.3 958.9 1580.0 962.0 M1514.7 966.7 C1518.6 965.9 1531.0 961.2 1538.0 962.0 C1545.0 962.8 1550.4 967.4 1556.7 971.3 C1562.9 975.2 1572.2 983.0 1575.3 985.3 M1533.3 803.3 C1535.7 806.4 1542.7 818.1 1547.3 822.0 C1552.0 825.9 1556.7 823.6 1561.3 826.7 C1566.0 829.8 1573.0 838.3 1575.3 840.7 M1496.0 873.3 C1499.1 874.1 1508.4 878.0 1514.7 878.0 C1520.9 878.0 1530.2 874.1 1533.3 873.3 M1519.3 915.3 C1522.4 916.1 1533.3 915.3 1538.0 920.0 C1542.7 924.7 1547.3 935.6 1547.3 943.3 C1547.3 951.1 1539.6 962.8 1538.0 966.7 M1591.7 873.3 C1593.6 877.2 1599.8 888.9 1603.3 896.7 C1606.8 904.4 1612.7 911.4 1612.7 920.0 C1612.7 928.6 1604.9 943.3 1603.3 948.0" fill="none" stroke="#f8f6f2" stroke-width="1"/>
<path d="M1510.0 865.2 L1533.3 861.7 L1547.8 873.3 L1543.1 887.8 L1519.3 890.1Z" fill="#f2d8d8"/>
<path d="M1402.7 979.2 L1426.0 976.8 L1447.0 982.7 L1447.0 1031.7 L1416.7 1032.8 L1405.0 1020.0Z" fill="#f1e3c3"/>
<path d="M1531.0 996.7 L1556.7 996.7 L1556.7 1013.5 L1531.0 1013.5Z" fill="#f1e3c3"/>
<path d="M1742.7 1022.3 L1756.7 1022.3 L1756.7 1034.0 L1742.7 1034.0Z" fill="#f1e3c3"/>
<path d="M1542.7 703.0 L1554.3 701.1 L1555.5 710.0 L1543.8 711.4Z" fill="#f1e3c3"/>
<path d="M1400.3 643.0 L1409.7 622.0 L1420.2 589.3 L1428.3 561.3 L1432.5 547.3 L1434.2 543.8 L1447.0 542.7 L1463.3 545.0 L1479.7 556.7 L1503.0 566.0 L1540.3 573.0 L1540.3 657.0 L1486.7 657.0 L1485.5 662.8 L1414.3 662.1 L1405.0 651.2Z" fill="#cadfaa"/>
<path d="M1434.2 543.8 L1447.0 542.7 L1463.3 545.0 L1479.7 556.7 L1503.0 566.0 L1504.2 576.5 L1482.0 571.8 L1463.3 561.3 L1449.3 549.7 L1437.7 547.8Z" fill="#efe9da"/>
<path d="M1382.1 651.2 L1393.3 648.8 L1400.3 643.0 L1409.7 622.0 L1414.3 624.3 L1405.0 647.7 L1395.7 653.5 L1382.1 655.8Z" fill="#f0ead2"/>
<path d="M1382.1 749.7 L1428.3 745.5 L1468.0 742.7 L1538.0 736.1 L1541.5 770.7 L1463.3 777.7 L1382.1 783.5Z" fill="#cadfaa"/>
<path d="M1541.5 743.8 L1571.1 740.8 L1571.8 746.9 L1542.2 750.1Z" fill="#cadfaa"/>
<path d="M1620.8 684.3 L1629.5 683.6 L1629.9 693.2 L1621.3 693.9Z M1521.2 706.5 L1531.0 705.8 L1531.5 714.7 L1521.7 715.4Z M1617.3 718.2 L1626.7 717.5 L1627.1 726.3 L1617.8 727.0Z M1599.8 780.0 L1612.7 777.7 L1616.2 791.7 L1603.3 801.0 L1597.5 791.7Z M1585.8 771.8 L1595.2 770.7 L1596.3 780.0 L1587.0 781.2Z M1653.5 820.7 L1659.1 820.2 L1659.6 831.2 L1654.0 831.6Z M1789.3 831.2 L1795.9 830.7 L1796.3 841.7 L1789.8 842.1Z M1652.8 692.3 L1659.8 691.9 L1660.3 698.2 L1653.3 698.6Z M1400.3 859.3 L1410.8 858.9 L1411.5 869.8 L1401.0 870.5Z M1466.8 867.5 L1476.2 866.8 L1476.9 875.7 L1467.5 876.4Z M1420.2 894.3 L1428.3 893.9 L1428.8 903.7 L1420.6 904.4Z M1402.7 934.1 L1447.0 932.5 L1447.5 945.8 L1403.1 947.2Z M1526.3 922.0 L1549.7 920.8 L1550.8 941.1 L1531.0 942.5Z M1382.1 1007.2 L1405.0 1010.7 L1407.3 1057.3 L1382.1 1058.5Z M1402.7 1078.3 L1463.3 1077.2 L1464.5 1115.7 L1402.7 1115.7Z M1631.3 1052.7 L1650.0 1051.5 L1650.0 1076.5 L1632.5 1077.2Z M1507.7 1090.0 L1533.3 1085.3 L1538.0 1099.3 L1510.0 1104.0Z M1668.0 1017.7 L1717.0 1016.5 L1718.2 1043.3 L1669.2 1044.5Z M1640.0 1051.5 L1710.0 1049.9 L1711.2 1085.3 L1640.0 1086.5Z M1705.3 901.0 L1717.5 900.5 L1717.9 910.8 L1705.8 911.3Z M1685.5 936.0 L1696.5 935.5 L1696.9 948.1 L1686.0 948.6Z M1789.3 1052.7 L1826.7 1051.5 L1827.8 1076.5 L1790.5 1077.2Z M1833.7 1085.3 L1859.3 1084.4 L1860.5 1113.3 L1834.8 1114.0Z M1839.5 927.7 L1850.0 926.5 L1857.0 937.0 L1845.3 939.3Z M1882.7 925.3 L1896.7 930.0 L1889.7 944.0 L1880.3 937.0Z M1803.3 1078.3 L1824.3 1077.2 L1826.7 1097.0 L1804.5 1098.2Z M1631.3 789.3 L1640.7 788.6 L1641.4 798.7 L1632.0 799.4Z M1388.7 845.3 L1395.7 844.9 L1396.1 854.7 L1389.1 855.1Z" fill="#cfe3b3"/>
<path d="M1382.1 982.7 L1395.7 985.0 L1405.0 1001.3 L1398.0 1010.7 L1382.1 1006.0Z" fill="#a9c6ee"/>
<path d="M1382.1 1055.0 L1393.3 1052.7 L1400.3 1066.7 L1395.7 1080.7 L1382.1 1083.0Z" fill="#a9c6ee"/>
<path d="M1880.3 930.0 L1900.2 927.7 L1900.2 958.0 L1889.7 967.3 L1882.7 953.3 L1887.8 939.3Z" fill="#a9c6ee"/>
<path d="M1900.2 1011.7 L1889.7 1023.3 L1883.8 1046.7 L1882.7 1070.0 L1868.7 1084.0 L1861.7 1095.7 L1859.3 1116.7 L1900.2 1116.7Z" fill="#a9c6ee"/>
<path d="M1815.0 883.3 L1873.3 882.2 L1882.7 874.0 L1900.2 871.7 L1900.2 895.0 L1882.7 891.5 L1873.3 889.9 L1815.0 889.9Z" fill="#a9c6ee"/>
<path d="M1717.0 996.7 L1725.2 995.5 L1732.2 1015.3 L1724.0 1020.0Z" fill="#8fb4e8"/>
<path d="M1438.8 759.5 L1451.7 758.5 L1452.1 761.8 L1447.0 763.7 L1451.7 767.2 L1440.0 768.3Z" fill="#8fb4e8"/>
<path d="M1500.7 851.2 L1510.0 855.8 L1507.7 860.5 L1499.5 855.8ZM1533.3 853.5 L1543.8 854.7 L1543.1 860.5 L1533.3 859.3ZM1459.8 654.0 L1470.3 656.3 L1469.2 662.2 L1459.8 661.0Z" fill="#8fb4e8"/>
<path d="M1382.1 703.0 C1403.4 702.0 1465.4 699.3 1510.0 697.2 C1554.6 695.0 1615.0 691.9 1650.0 690.2 C1685.0 688.4 1708.3 687.3 1720.0 686.7 M1382.1 677.3 C1403.4 676.2 1465.4 673.1 1510.0 670.8 C1554.6 668.5 1615.0 665.2 1650.0 663.3 C1685.0 661.5 1708.3 660.4 1720.0 659.8 M1382.1 747.8 C1395.7 746.8 1437.4 743.8 1463.3 741.7 C1489.3 739.6 1506.9 737.4 1538.0 735.2 C1569.1 733.0 1631.3 729.8 1650.0 728.7 M1382.1 787.0 C1408.7 784.9 1496.9 777.5 1541.5 774.2 C1586.1 770.9 1620.3 769.3 1650.0 767.2 C1679.8 765.0 1708.3 762.3 1720.0 761.3 M1402.7 640.0 L1405.0 747.3 M1521.7 647.0 L1522.8 738.0 M1633.7 640.0 L1636.0 780.0 M1496.0 780.0 L1497.2 850.0 M1406.2 787.0 L1407.3 943.3 M1800.0 618.0 C1794.2 623.3 1779.5 637.0 1765.0 650.0 C1750.5 663.0 1729.7 681.0 1712.7 696.0 C1695.7 711.0 1675.1 729.0 1663.0 740.0 C1650.9 751.0 1648.0 753.7 1640.0 762.0 C1632.0 770.3 1623.0 780.7 1615.0 790.0 C1607.0 799.3 1595.8 813.3 1592.0 818.0 M1812.0 630.0 C1806.0 635.3 1790.7 649.0 1776.0 662.0 C1761.3 675.0 1736.7 695.3 1724.0 708.0 C1711.3 720.7 1705.3 724.3 1700.0 738.0 C1694.7 751.7 1693.7 762.2 1692.0 790.0 C1690.3 817.8 1690.3 885.8 1690.0 905.0 M1640.0 792.7 C1649.7 792.3 1678.9 791.0 1698.3 790.3 C1717.8 789.6 1746.9 788.8 1756.7 788.5 M1640.0 855.7 C1651.7 855.3 1691.7 854.1 1710.0 853.3 C1728.3 852.6 1743.1 851.4 1749.7 851.0 M1668.0 760.0 L1670.3 900.0 M1700.7 760.0 L1702.5 900.0 M1833.7 880.0 C1833.3 885.8 1834.1 902.2 1831.3 915.0 C1828.6 927.8 1823.9 936.4 1817.3 957.0 C1810.7 977.6 1799.4 1017.3 1791.7 1038.7 C1783.9 1060.1 1774.9 1072.5 1770.7 1085.3 C1766.4 1098.2 1766.8 1110.6 1766.0 1115.7 M1830.2 710.0 C1829.8 721.7 1827.4 756.7 1827.8 780.0 C1828.2 803.3 1831.1 826.7 1832.5 850.0 C1833.9 873.3 1835.4 908.3 1836.0 920.0 M1382.1 957.0 C1392.9 957.0 1433.5 957.2 1447.0 957.0 C1460.5 956.8 1460.6 956.0 1463.3 955.8 M1447.0 973.3 C1455.9 974.5 1481.2 972.9 1500.7 980.3 C1520.1 987.7 1538.8 1010.3 1563.7 1017.7 C1588.6 1025.1 1635.6 1023.5 1650.0 1024.7 M1496.0 968.7 C1506.1 969.4 1534.9 972.6 1556.7 973.3 C1578.4 974.1 1615.0 973.3 1626.7 973.3 M1462.2 955.8 C1466.4 951.4 1477.9 934.4 1487.8 929.0 C1497.8 923.6 1512.5 927.4 1521.7 923.2 C1530.8 918.9 1536.8 909.0 1542.7 903.3 C1548.5 897.7 1554.3 891.7 1556.7 889.3 M1556.7 889.3 C1560.6 888.6 1573.8 888.6 1580.0 884.7 C1586.2 880.8 1590.9 874.6 1594.0 866.0 C1597.1 857.4 1597.9 838.8 1598.7 833.3 M1573.0 903.3 C1575.3 908.8 1584.3 928.2 1587.0 936.0 C1589.7 943.8 1586.6 946.5 1589.3 950.0 C1592.1 953.5 1593.2 955.4 1603.3 957.0 C1613.4 958.6 1642.2 958.9 1650.0 959.3 M1405.0 1010.7 C1405.0 1020.0 1405.4 1049.2 1405.0 1066.7 C1404.6 1084.2 1403.1 1107.5 1402.7 1115.7 M1382.1 1070.2 C1395.7 1069.6 1443.6 1066.5 1463.3 1066.7 C1483.1 1066.9 1494.4 1070.6 1500.7 1071.3 M1640.0 945.3 C1647.8 942.2 1669.6 928.6 1686.7 926.7 C1703.8 924.7 1733.3 932.5 1742.7 933.7 M1749.7 957.0 C1758.6 958.9 1786.6 963.2 1803.3 968.7 C1820.1 974.1 1842.2 986.2 1850.0 989.7 M1640.0 1050.3 C1645.1 1051.1 1658.7 1056.2 1670.3 1055.0 C1682.0 1053.8 1696.8 1047.2 1710.0 1043.3 C1723.2 1039.4 1739.6 1037.9 1749.7 1031.7 C1759.8 1025.4 1767.2 1010.3 1770.7 1006.0 M1710.0 1043.3 C1714.7 1045.7 1727.9 1050.3 1738.0 1057.3 C1748.1 1064.3 1765.2 1080.7 1770.7 1085.3 M1780.0 903.3 L1831.3 915.0 M1756.7 910.3 C1764.4 916.6 1793.2 939.9 1803.3 947.7 C1813.4 955.4 1815.0 955.4 1817.3 957.0 M1563.7 1017.7 C1566.4 1021.9 1573.4 1036.7 1580.0 1043.3 C1586.6 1049.9 1591.7 1053.4 1603.3 1057.3 C1615.0 1061.2 1642.2 1065.1 1650.0 1066.7 M1617.3 1020.0 C1615.0 1026.2 1609.6 1045.7 1603.3 1057.3 C1597.1 1069.0 1583.9 1084.6 1580.0 1090.0 M1437.7 657.0 C1436.9 650.4 1431.4 633.3 1433.0 617.3 C1434.6 601.4 1441.2 572.2 1447.0 561.3 C1452.8 550.4 1464.1 549.3 1468.0 552.0 C1471.9 554.7 1469.9 573.4 1470.3 577.7 M1407.3 657.0 C1409.3 655.8 1415.1 658.9 1419.0 650.0 C1422.9 641.1 1427.2 616.6 1430.7 603.3 C1434.2 590.1 1438.4 576.1 1440.0 570.7 M1472.7 580.0 C1475.8 580.0 1489.0 578.1 1491.3 580.0 C1493.7 581.9 1489.4 590.1 1486.7 591.7 C1483.9 593.2 1476.9 589.7 1475.0 589.3" fill="none" stroke="#fff" stroke-width="2.200" stroke-linejoin="round"/>
<path d="M1803.3 880.0 C1802.9 887.8 1803.3 907.2 1801.0 926.7 C1798.7 946.1 1792.8 977.2 1789.3 996.7 C1785.8 1016.1 1783.9 1023.9 1780.0 1043.3 C1776.1 1062.8 1768.3 1101.7 1766.0 1113.3" fill="none" stroke="#cfcac0" stroke-width="1"/>
</g>
<path d="M1470.3 577.7 C1470.5 581.9 1471.5 593.2 1471.5 603.3 C1471.5 613.4 1471.3 629.8 1470.3 638.3 C1469.4 646.9 1467.4 650.2 1465.7 654.7 C1463.9 659.1 1460.8 664.5 1459.8 665.2 C1458.9 665.8 1459.8 653.1 1459.8 658.7 C1459.8 664.2 1459.6 685.9 1459.8 698.3 C1460.1 710.8 1461.2 726.1 1461.5 733.3 C1461.8 740.5 1462.2 739.7 1461.7 741.5 C1461.2 743.3 1463.3 743.4 1458.7 744.3 C1454.1 745.2 1438.9 745.7 1434.2 746.6 C1429.4 747.5 1430.7 748.0 1430.2 749.7 C1429.7 751.3 1430.1 751.6 1431.1 756.7 C1432.2 761.7 1435.0 772.2 1436.5 780.0 C1438.0 787.8 1439.0 789.7 1440.0 803.3 C1441.1 816.9 1442.0 843.4 1442.8 861.7 C1443.6 879.9 1444.3 906.1 1444.7 913.0 C1445.1 919.9 1444.7 893.3 1445.1 903.3 C1445.5 913.4 1446.1 955.4 1447.0 973.3 C1447.9 991.2 1448.4 996.7 1450.5 1010.7 C1452.6 1024.7 1457.5 1044.1 1459.8 1057.3 C1462.2 1070.6 1463.7 1080.3 1464.5 1090.0 C1465.3 1099.7 1464.5 1111.4 1464.5 1115.7" fill="none" stroke="#e4b545" stroke-width="6.600" stroke-linejoin="round"/>
<path d="M1685.5 650.3 C1685.5 658.1 1685.7 685.7 1685.5 697.0 C1685.3 708.3 1685.5 711.4 1684.3 718.0 C1683.2 724.6 1680.1 731.8 1678.5 736.7 C1676.9 741.5 1675.6 745.4 1675.0 747.2" fill="none" stroke="#e4b545" stroke-width="6.600" stroke-linejoin="round"/>
<path d="M1470.3 577.7 C1470.5 581.9 1471.5 593.2 1471.5 603.3 C1471.5 613.4 1471.3 629.8 1470.3 638.3 C1469.4 646.9 1467.4 650.2 1465.7 654.7 C1463.9 659.1 1460.8 664.5 1459.8 665.2 C1458.9 665.8 1459.8 653.1 1459.8 658.7 C1459.8 664.2 1459.6 685.9 1459.8 698.3 C1460.1 710.8 1461.2 726.1 1461.5 733.3 C1461.8 740.5 1462.2 739.7 1461.7 741.5 C1461.2 743.3 1463.3 743.4 1458.7 744.3 C1454.1 745.2 1438.9 745.7 1434.2 746.6 C1429.4 747.5 1430.7 748.0 1430.2 749.7 C1429.7 751.3 1430.1 751.6 1431.1 756.7 C1432.2 761.7 1435.0 772.2 1436.5 780.0 C1438.0 787.8 1439.0 789.7 1440.0 803.3 C1441.1 816.9 1442.0 843.4 1442.8 861.7 C1443.6 879.9 1444.3 906.1 1444.7 913.0 C1445.1 919.9 1444.7 893.3 1445.1 903.3 C1445.5 913.4 1446.1 955.4 1447.0 973.3 C1447.9 991.2 1448.4 996.7 1450.5 1010.7 C1452.6 1024.7 1457.5 1044.1 1459.8 1057.3 C1462.2 1070.6 1463.7 1080.3 1464.5 1090.0 C1465.3 1099.7 1464.5 1111.4 1464.5 1115.7" fill="none" stroke="#f9d664" stroke-width="4.600" stroke-linejoin="round"/>
<path d="M1685.5 650.3 C1685.5 658.1 1685.7 685.7 1685.5 697.0 C1685.3 708.3 1685.5 711.4 1684.3 718.0 C1683.2 724.6 1680.1 731.8 1678.5 736.7 C1676.9 741.5 1675.6 745.4 1675.0 747.2" fill="none" stroke="#f9d664" stroke-width="4.600" stroke-linejoin="round"/>
<path d="M1379.3 305.0 C1379.8 305.8 1379.4 305.0 1382.1 309.7 C1384.9 314.3 1392.6 326.0 1395.7 333.0 C1398.7 340.0 1400.5 345.1 1400.3 351.7 C1400.1 358.3 1393.7 365.7 1394.5 372.7 C1395.3 379.7 1400.1 387.1 1405.0 393.7 C1409.9 400.3 1419.6 407.3 1423.7 412.3 C1427.8 417.4 1428.3 415.4 1429.5 424.0 C1430.7 432.6 1430.8 457.1 1431.1 463.7 C1431.5 470.2 1431.4 459.5 1431.6 463.3 C1431.8 467.2 1432.1 478.9 1432.5 486.7 C1433.0 494.4 1433.3 501.4 1434.2 510.0 C1435.0 518.6 1435.5 530.2 1437.7 538.0 C1439.8 545.8 1442.7 551.2 1447.0 556.7 C1451.3 562.1 1457.5 567.0 1463.3 570.7 C1469.2 574.4 1475.4 577.1 1482.0 578.8 C1488.6 580.6 1494.4 581.0 1503.0 581.2 C1511.6 581.4 1528.3 580.2 1533.3 580.0" fill="none" stroke="#e2912a" stroke-width="7.400" stroke-linejoin="round"/>
<path d="M1850.0 643.3 C1847.7 644.9 1840.3 649.6 1836.0 652.7 C1831.7 655.8 1828.2 657.3 1824.3 662.0 C1820.4 666.7 1818.5 675.6 1812.7 680.7 C1806.8 685.7 1796.3 687.3 1789.3 692.3 C1782.3 697.4 1776.1 704.8 1770.7 711.0 C1765.2 717.2 1760.2 724.2 1756.7 729.7 C1753.2 735.1 1750.6 738.6 1749.7 743.7 C1748.7 748.7 1750.4 754.9 1750.8 760.0 C1751.2 765.1 1752.2 767.8 1752.0 774.0 C1751.8 780.2 1749.3 789.6 1749.7 797.3 C1750.1 805.1 1751.6 814.1 1754.3 820.7 C1757.1 827.3 1764.3 831.6 1766.0 837.0 C1767.8 842.4 1765.2 848.3 1764.8 853.3 C1764.4 858.4 1764.3 862.9 1763.7 867.3 C1763.1 871.8 1763.7 873.2 1761.3 880.0 C1759.0 886.8 1752.8 899.1 1749.7 908.0 C1746.6 916.9 1742.7 925.5 1742.7 933.7 C1742.7 941.8 1745.0 944.9 1749.7 957.0 C1754.3 969.1 1765.6 992.4 1770.7 1006.0 C1775.7 1019.6 1776.5 1027.8 1780.0 1038.7 C1783.5 1049.6 1788.4 1062.8 1791.7 1071.3 C1795.0 1079.9 1798.5 1082.6 1799.8 1090.0 C1801.2 1097.4 1799.8 1111.4 1799.8 1115.7" fill="none" stroke="#e2912a" stroke-width="7.400" stroke-linejoin="round"/>
<path d="M1749.7 750.7 C1745.0 751.8 1731.0 756.1 1721.7 757.7 C1712.3 759.2 1701.4 761.2 1693.7 760.0 C1685.9 758.8 1678.5 753.0 1675.0 750.7 C1671.5 748.3 1673.1 746.8 1672.7 746.0" fill="none" stroke="#e2912a" stroke-width="7.400" stroke-linejoin="round"/>
<path d="M1789.3 750.7 C1790.9 754.8 1795.2 768.2 1798.7 775.2 C1802.2 782.2 1808.0 783.5 1810.3 792.7 C1812.7 801.8 1812.1 817.9 1812.7 830.0 C1813.3 842.1 1814.6 856.7 1813.8 865.0 C1813.1 873.3 1810.5 873.6 1808.0 880.0 C1805.5 886.4 1803.3 895.6 1798.7 903.3 C1794.0 911.1 1787.0 919.3 1780.0 926.7 C1773.0 934.1 1764.4 941.8 1756.7 947.7 C1748.9 953.5 1743.1 958.0 1733.3 961.7 C1723.6 965.4 1713.9 968.5 1698.3 969.8 C1682.8 971.2 1651.9 969.3 1640.0 969.8 C1628.1 970.4 1632.8 971.2 1626.7 973.3 C1620.6 975.5 1611.1 978.4 1603.3 982.7 C1595.6 986.9 1585.8 992.8 1580.0 999.0 C1574.2 1005.2 1571.1 1011.1 1568.3 1020.0 C1565.6 1028.9 1566.4 1043.7 1563.7 1052.7 C1560.9 1061.6 1557.1 1067.8 1552.0 1073.7 C1546.9 1079.5 1545.0 1084.4 1533.3 1087.7 C1521.7 1091.0 1492.9 1092.1 1482.0 1093.5 C1471.1 1094.9 1470.3 1095.4 1468.0 1095.8" fill="none" stroke="#e2912a" stroke-width="7.400" stroke-linejoin="round"/>
<path d="M1891.0 583.0 C1892.0 582.2 1894.7 580.2 1897.0 578.0 C1899.3 575.8 1903.7 571.3 1905.0 570.0" fill="none" stroke="#e2912a" stroke-width="7.400" stroke-linejoin="round"/>
<path d="M1379.3 305.0 C1379.8 305.8 1379.4 305.0 1382.1 309.7 C1384.9 314.3 1392.6 326.0 1395.7 333.0 C1398.7 340.0 1400.5 345.1 1400.3 351.7 C1400.1 358.3 1393.7 365.7 1394.5 372.7 C1395.3 379.7 1400.1 387.1 1405.0 393.7 C1409.9 400.3 1419.6 407.3 1423.7 412.3 C1427.8 417.4 1428.3 415.4 1429.5 424.0 C1430.7 432.6 1430.8 457.1 1431.1 463.7 C1431.5 470.2 1431.4 459.5 1431.6 463.3 C1431.8 467.2 1432.1 478.9 1432.5 486.7 C1433.0 494.4 1433.3 501.4 1434.2 510.0 C1435.0 518.6 1435.5 530.2 1437.7 538.0 C1439.8 545.8 1442.7 551.2 1447.0 556.7 C1451.3 562.1 1457.5 567.0 1463.3 570.7 C1469.2 574.4 1475.4 577.1 1482.0 578.8 C1488.6 580.6 1494.4 581.0 1503.0 581.2 C1511.6 581.4 1528.3 580.2 1533.3 580.0" fill="none" stroke="#f7a533" stroke-width="5.400" stroke-linejoin="round"/>
<path d="M1850.0 643.3 C1847.7 644.9 1840.3 649.6 1836.0 652.7 C1831.7 655.8 1828.2 657.3 1824.3 662.0 C1820.4 666.7 1818.5 675.6 1812.7 680.7 C1806.8 685.7 1796.3 687.3 1789.3 692.3 C1782.3 697.4 1776.1 704.8 1770.7 711.0 C1765.2 717.2 1760.2 724.2 1756.7 729.7 C1753.2 735.1 1750.6 738.6 1749.7 743.7 C1748.7 748.7 1750.4 754.9 1750.8 760.0 C1751.2 765.1 1752.2 767.8 1752.0 774.0 C1751.8 780.2 1749.3 789.6 1749.7 797.3 C1750.1 805.1 1751.6 814.1 1754.3 820.7 C1757.1 827.3 1764.3 831.6 1766.0 837.0 C1767.8 842.4 1765.2 848.3 1764.8 853.3 C1764.4 858.4 1764.3 862.9 1763.7 867.3 C1763.1 871.8 1763.7 873.2 1761.3 880.0 C1759.0 886.8 1752.8 899.1 1749.7 908.0 C1746.6 916.9 1742.7 925.5 1742.7 933.7 C1742.7 941.8 1745.0 944.9 1749.7 957.0 C1754.3 969.1 1765.6 992.4 1770.7 1006.0 C1775.7 1019.6 1776.5 1027.8 1780.0 1038.7 C1783.5 1049.6 1788.4 1062.8 1791.7 1071.3 C1795.0 1079.9 1798.5 1082.6 1799.8 1090.0 C1801.2 1097.4 1799.8 1111.4 1799.8 1115.7" fill="none" stroke="#f7a533" stroke-width="5.400" stroke-linejoin="round"/>
<path d="M1749.7 750.7 C1745.0 751.8 1731.0 756.1 1721.7 757.7 C1712.3 759.2 1701.4 761.2 1693.7 760.0 C1685.9 758.8 1678.5 753.0 1675.0 750.7 C1671.5 748.3 1673.1 746.8 1672.7 746.0" fill="none" stroke="#f7a533" stroke-width="5.400" stroke-linejoin="round"/>
<path d="M1789.3 750.7 C1790.9 754.8 1795.2 768.2 1798.7 775.2 C1802.2 782.2 1808.0 783.5 1810.3 792.7 C1812.7 801.8 1812.1 817.9 1812.7 830.0 C1813.3 842.1 1814.6 856.7 1813.8 865.0 C1813.1 873.3 1810.5 873.6 1808.0 880.0 C1805.5 886.4 1803.3 895.6 1798.7 903.3 C1794.0 911.1 1787.0 919.3 1780.0 926.7 C1773.0 934.1 1764.4 941.8 1756.7 947.7 C1748.9 953.5 1743.1 958.0 1733.3 961.7 C1723.6 965.4 1713.9 968.5 1698.3 969.8 C1682.8 971.2 1651.9 969.3 1640.0 969.8 C1628.1 970.4 1632.8 971.2 1626.7 973.3 C1620.6 975.5 1611.1 978.4 1603.3 982.7 C1595.6 986.9 1585.8 992.8 1580.0 999.0 C1574.2 1005.2 1571.1 1011.1 1568.3 1020.0 C1565.6 1028.9 1566.4 1043.7 1563.7 1052.7 C1560.9 1061.6 1557.1 1067.8 1552.0 1073.7 C1546.9 1079.5 1545.0 1084.4 1533.3 1087.7 C1521.7 1091.0 1492.9 1092.1 1482.0 1093.5 C1471.1 1094.9 1470.3 1095.4 1468.0 1095.8" fill="none" stroke="#f7a533" stroke-width="5.400" stroke-linejoin="round"/>
<path d="M1891.0 583.0 C1892.0 582.2 1894.7 580.2 1897.0 578.0 C1899.3 575.8 1903.7 571.3 1905.0 570.0" fill="none" stroke="#f7a533" stroke-width="5.400" stroke-linejoin="round"/>
<text x="1382.7" y="269.6" fill="#fff" stroke="#fff" stroke-opacity=".8" fill-opacity=".8" stroke-width="3.0" stroke-linejoin="round" style="font-size:19.5px;" textLength="59.0" lengthAdjust="spacing">usalito</text><text x="1382.7" y="269.6" fill="#333" stroke="#333" stroke-width="0.20" style="font-size:19.5px;" textLength="59.0" lengthAdjust="spacing">usalito</text>
<text x="1469.0" y="176.5" fill="#fff" stroke="#fff" stroke-opacity=".8" fill-opacity=".8" stroke-width="3.0" stroke-linejoin="round" style="font-size:19.5px;" textLength="60.0" lengthAdjust="spacing">Tiburon</text><text x="1469.0" y="176.5" fill="#333" stroke="#333" stroke-width="0.20" style="font-size:19.5px;" textLength="60.0" lengthAdjust="spacing">Tiburon</text>
<text x="1589.8" y="238.4" fill="#fff" stroke="#fff" stroke-opacity=".8" fill-opacity=".8" stroke-width="3.0" stroke-linejoin="round" style="font-size:15.5px;font-style:italic;" textLength="91.0" lengthAdjust="spacing">Angel Island</text><text x="1589.8" y="238.4" fill="#3f7a35" stroke="#3f7a35" stroke-width="0.10" style="font-size:15.5px;font-style:italic;" textLength="91.0" lengthAdjust="spacing">Angel Island</text>
<text x="1596.8" y="255.0" fill="#fff" stroke="#fff" stroke-opacity=".8" fill-opacity=".8" stroke-width="3.0" stroke-linejoin="round" style="font-size:15.5px;font-style:italic;" textLength="76.7" lengthAdjust="spacing">State Park</text><text x="1596.8" y="255.0" fill="#3f7a35" stroke="#3f7a35" stroke-width="0.10" style="font-size:15.5px;font-style:italic;" textLength="76.7" lengthAdjust="spacing">State Park</text>
<text x="1387.5" y="512.5" fill="#4f74ad" stroke="#4f74ad" stroke-width="0.35" style="font-size:17.5px;" textLength="37.5" lengthAdjust="spacing" transform="rotate(-13.0 1387.5 512.5)">Gate</text>
<text x="1457.5" y="603.3" fill="#fff" stroke="#fff" stroke-opacity=".8" fill-opacity=".8" stroke-width="2.6" stroke-linejoin="round" style="font-size:13.5px;font-style:italic;" textLength="60.5" lengthAdjust="spacing">PRESIDIO</text><text x="1457.5" y="603.3" fill="#7f8c6c" stroke="#7f8c6c" stroke-width="0.35" style="font-size:13.5px;font-style:italic;" textLength="60.5" lengthAdjust="spacing">PRESIDIO</text>
<text x="1384.0" y="674.0" fill="#fff" stroke="#fff" stroke-opacity=".8" fill-opacity=".8" stroke-width="2.6" stroke-linejoin="round" style="font-size:13.5px;font-style:italic;" textLength="27.0" lengthAdjust="spacing">LIFF</text><text x="1384.0" y="674.0" fill="#857f72" stroke="#857f72" stroke-width="0.35" style="font-size:13.5px;font-style:italic;" textLength="27.0" lengthAdjust="spacing">LIFF</text>
<text x="1474.0" y="681.5" fill="#fff" stroke="#fff" stroke-opacity=".8" fill-opacity=".8" stroke-width="3.2" stroke-linejoin="round" style="font-size:14px;" textLength="74.5" lengthAdjust="spacing" transform="rotate(-8.0 1474.0 681.5)">California St</text><text x="1474.0" y="681.5" fill="#2e2e2e" stroke="#2e2e2e" stroke-width="0.35" style="font-size:14px;" textLength="74.5" lengthAdjust="spacing" transform="rotate(-8.0 1474.0 681.5)">California St</text>
<text x="1476.0" y="704.5" fill="#fff" stroke="#fff" stroke-opacity=".8" fill-opacity=".8" stroke-width="3.2" stroke-linejoin="round" style="font-size:14px;" textLength="64.0" lengthAdjust="spacing" transform="rotate(-6.5 1476.0 704.5)">Geary Blvd</text><text x="1476.0" y="704.5" fill="#2e2e2e" stroke="#2e2e2e" stroke-width="0.35" style="font-size:14px;" textLength="64.0" lengthAdjust="spacing" transform="rotate(-6.5 1476.0 704.5)">Geary Blvd</text>
<text x="1384.0" y="727.5" fill="#fff" stroke="#fff" stroke-opacity=".8" fill-opacity=".8" stroke-width="2.6" stroke-linejoin="round" style="font-size:13.5px;font-style:italic;" textLength="9.0" lengthAdjust="spacing">ID</text><text x="1384.0" y="727.5" fill="#857f72" stroke="#857f72" stroke-width="0.35" style="font-size:13.5px;font-style:italic;" textLength="9.0" lengthAdjust="spacing">ID</text>
<text x="1382.8" y="761.3" fill="#fff" stroke="#fff" stroke-opacity=".8" fill-opacity=".8" stroke-width="3.0" stroke-linejoin="round" style="font-size:18px;" textLength="40.9" lengthAdjust="spacing">olden</text><text x="1382.8" y="761.3" fill="#3a7d3a" stroke="#3a7d3a" stroke-width="0.35" style="font-size:18px;" textLength="40.9" lengthAdjust="spacing">olden</text>
<text x="1382.8" y="777.7" fill="#fff" stroke="#fff" stroke-opacity=".8" fill-opacity=".8" stroke-width="3.0" stroke-linejoin="round" style="font-size:18px;" textLength="51.2" lengthAdjust="spacing">te Park</text><text x="1382.8" y="777.7" fill="#3a7d3a" stroke="#3a7d3a" stroke-width="0.35" style="font-size:18px;" textLength="51.2" lengthAdjust="spacing">te Park</text>
<text x="1510.0" y="768.3" fill="#fff" stroke="#fff" stroke-opacity=".8" fill-opacity=".8" stroke-width="2.6" stroke-linejoin="round" style="font-size:13.5px;font-style:italic;" textLength="113.0" lengthAdjust="spacing">HAIGHT-ASHBURY</text><text x="1510.0" y="768.3" fill="#857f72" stroke="#857f72" stroke-width="0.35" style="font-size:13.5px;font-style:italic;" textLength="113.0" lengthAdjust="spacing">HAIGHT-ASHBURY</text>
<text x="1589.3" y="741.8" fill="#fff" stroke="#fff" stroke-opacity=".8" fill-opacity=".8" stroke-width="4.0" stroke-linejoin="round" style="font-size:30.5px;" textLength="207.7" lengthAdjust="spacing">San Francisco</text><text x="1589.3" y="741.8" fill="#36322c" stroke="#36322c" stroke-width="0.55" style="font-size:30.5px;" textLength="207.7" lengthAdjust="spacing">San Francisco</text>
<text x="1585.8" y="815.0" fill="#fff" stroke="#fff" stroke-opacity=".8" fill-opacity=".8" stroke-width="2.6" stroke-linejoin="round" style="font-size:13.5px;font-style:italic;" textLength="77.5" lengthAdjust="spacing">THE CASTRO</text><text x="1585.8" y="815.0" fill="#857f72" stroke="#857f72" stroke-width="0.35" style="font-size:13.5px;font-style:italic;" textLength="77.5" lengthAdjust="spacing">THE CASTRO</text>
<text x="0.0" y="0.0" fill="#fff" stroke="#fff" stroke-opacity=".8" fill-opacity=".8" stroke-width="3.2" stroke-linejoin="round" style="font-size:14px;" textLength="68.0" lengthAdjust="spacing" transform="translate(1670.5 784.5) rotate(90)">Guerrero St</text><text x="0.0" y="0.0" fill="#2e2e2e" stroke="#2e2e2e" stroke-width="0.35" style="font-size:14px;" textLength="68.0" lengthAdjust="spacing" transform="translate(1670.5 784.5) rotate(90)">Guerrero St</text>
<text x="1719.5" y="788.0" fill="#fff" stroke="#fff" stroke-opacity=".8" fill-opacity=".8" stroke-width="3.0" stroke-linejoin="round" style="font-size:13.5px;" textLength="39.5" lengthAdjust="spacing">16th St</text><text x="1719.5" y="788.0" fill="#2e2e2e" stroke="#2e2e2e" stroke-width="0.35" style="font-size:13.5px;" textLength="39.5" lengthAdjust="spacing">16th St</text>
<text x="1685.5" y="813.7" fill="#fff" stroke="#fff" stroke-opacity=".8" fill-opacity=".8" stroke-width="2.6" stroke-linejoin="round" style="font-size:13.5px;font-style:italic;" textLength="56.0" lengthAdjust="spacing">MISSION</text><text x="1685.5" y="813.7" fill="#857f72" stroke="#857f72" stroke-width="0.35" style="font-size:13.5px;font-style:italic;" textLength="56.0" lengthAdjust="spacing">MISSION</text>
<text x="1684.3" y="827.2" fill="#fff" stroke="#fff" stroke-opacity=".8" fill-opacity=".8" stroke-width="2.6" stroke-linejoin="round" style="font-size:13.5px;font-style:italic;" textLength="58.4" lengthAdjust="spacing">DISTRICT</text><text x="1684.3" y="827.2" fill="#857f72" stroke="#857f72" stroke-width="0.35" style="font-size:13.5px;font-style:italic;" textLength="58.4" lengthAdjust="spacing">DISTRICT</text>
<text x="1790.5" y="825.3" fill="#fff" stroke="#fff" stroke-opacity=".8" fill-opacity=".8" stroke-width="2.6" stroke-linejoin="round" style="font-size:13.5px;font-style:italic;" textLength="68.8" lengthAdjust="spacing">DOGPATCH</text><text x="1790.5" y="825.3" fill="#857f72" stroke="#857f72" stroke-width="0.35" style="font-size:13.5px;font-style:italic;" textLength="68.8" lengthAdjust="spacing">DOGPATCH</text>
<text x="1383.0" y="845.3" fill="#fff" stroke="#fff" stroke-opacity=".8" fill-opacity=".8" stroke-width="2.6" stroke-linejoin="round" style="font-size:13.5px;font-style:italic;" textLength="29.0" lengthAdjust="spacing">NSET</text><text x="1383.0" y="845.3" fill="#857f72" stroke="#857f72" stroke-width="0.35" style="font-size:13.5px;font-style:italic;" textLength="29.0" lengthAdjust="spacing">NSET</text>
<text x="1383.0" y="893.9" fill="#fff" stroke="#fff" stroke-opacity=".8" fill-opacity=".8" stroke-width="2.6" stroke-linejoin="round" style="font-size:13.5px;font-style:italic;" textLength="70.0" lengthAdjust="spacing">T DISTRICT</text><text x="1383.0" y="893.9" fill="#857f72" stroke="#857f72" stroke-width="0.35" style="font-size:13.5px;font-style:italic;" textLength="70.0" lengthAdjust="spacing">T DISTRICT</text>
<text x="1645.8" y="924.8" fill="#fff" stroke="#fff" stroke-opacity=".8" fill-opacity=".8" stroke-width="2.6" stroke-linejoin="round" style="font-size:13.5px;font-style:italic;" textLength="109.7" lengthAdjust="spacing">BERNAL HEIGHTS</text><text x="1645.8" y="924.8" fill="#857f72" stroke="#857f72" stroke-width="0.35" style="font-size:13.5px;font-style:italic;" textLength="109.7" lengthAdjust="spacing">BERNAL HEIGHTS</text>
<text x="1383.0" y="962.8" fill="#fff" stroke="#fff" stroke-opacity=".8" fill-opacity=".8" stroke-width="3.2" stroke-linejoin="round" style="font-size:14px;" textLength="46.5" lengthAdjust="spacing">oat Blvd</text><text x="1383.0" y="962.8" fill="#2e2e2e" stroke="#2e2e2e" stroke-width="0.35" style="font-size:14px;" textLength="46.5" lengthAdjust="spacing">oat Blvd</text>
<text x="1382.8" y="1051.5" fill="#fff" stroke="#fff" stroke-opacity=".8" fill-opacity=".8" stroke-width="2.6" stroke-linejoin="round" style="font-size:13.5px;font-style:italic;" textLength="81.7" lengthAdjust="spacing">PARKMERCED</text><text x="1382.8" y="1051.5" fill="#857f72" stroke="#857f72" stroke-width="0.35" style="font-size:13.5px;font-style:italic;" textLength="81.7" lengthAdjust="spacing">PARKMERCED</text>
<text x="1526.3" y="1066.7" fill="#fff" stroke="#fff" stroke-opacity=".8" fill-opacity=".8" stroke-width="2.6" stroke-linejoin="round" style="font-size:13.5px;font-style:italic;" textLength="101.5" lengthAdjust="spacing">OUTER MISSION</text><text x="1526.3" y="1066.7" fill="#857f72" stroke="#857f72" stroke-width="0.35" style="font-size:13.5px;font-style:italic;" textLength="101.5" lengthAdjust="spacing">OUTER MISSION</text>
<text x="1724.0" y="1051.5" fill="#fff" stroke="#fff" stroke-opacity=".8" fill-opacity=".8" stroke-width="2.6" stroke-linejoin="round" style="font-size:13.5px;font-style:italic;" textLength="71.0" lengthAdjust="spacing">VISITACION</text><text x="1724.0" y="1051.5" fill="#857f72" stroke="#857f72" stroke-width="0.35" style="font-size:13.5px;font-style:italic;" textLength="71.0" lengthAdjust="spacing">VISITACION</text>
<text x="1736.8" y="1065.5" fill="#fff" stroke="#fff" stroke-opacity=".8" fill-opacity=".8" stroke-width="2.6" stroke-linejoin="round" style="font-size:13.5px;font-style:italic;" textLength="45.5" lengthAdjust="spacing">VALLEY</text><text x="1736.8" y="1065.5" fill="#857f72" stroke="#857f72" stroke-width="0.35" style="font-size:13.5px;font-style:italic;" textLength="45.5" lengthAdjust="spacing">VALLEY</text>
<text x="0.0" y="0.0" fill="#fff" stroke="#fff" stroke-opacity=".8" fill-opacity=".8" stroke-width="3.2" stroke-linejoin="round" style="font-size:14px;" textLength="38.0" lengthAdjust="spacing" transform="translate(1812.5 1002.5) rotate(-73)">3rd St</text><text x="0.0" y="0.0" fill="#2e2e2e" stroke="#2e2e2e" stroke-width="0.35" style="font-size:14px;" textLength="38.0" lengthAdjust="spacing" transform="translate(1812.5 1002.5) rotate(-73)">3rd St</text>
<text x="1894.0" y="455.5" fill="#857f72" stroke="#857f72" stroke-width="0.35" style="font-size:11px;font-style:italic;">E</text>
<text x="1893.5" y="469.0" fill="#857f72" stroke="#857f72" stroke-width="0.35" style="font-size:11px;font-style:italic;">S</text>
<text x="1859.3" y="999.5" fill="#fff" stroke="#fff" stroke-opacity=".8" fill-opacity=".8" stroke-width="2.6" stroke-linejoin="round" style="font-size:13.5px;font-style:italic;" textLength="58.7" lengthAdjust="spacing">HUNTERS</text><text x="1859.3" y="999.5" fill="#857f72" stroke="#857f72" stroke-width="0.35" style="font-size:13.5px;font-style:italic;" textLength="58.7" lengthAdjust="spacing">HUNTERS</text>
<circle cx="1487.800" cy="761.3" r="6.800" fill="#fff" stroke="#e3ded5" stroke-width=".8"/><path d="M1483.600 760.200l4.200-3.200 4.200 3.200v.8h-8.400zM1484.300 761.800h7v3.400h-7z" fill="#8d6e63"/>
<path d="M1423.0 464.0 c3.300 2.300 6.600 2.300 10 0 c3.300 2.300 6.600 2.300 10 0 l4 3.200 c-2.600 4.300 -1.600 8.200 1 11.500 c-1.200 6 -6 9.800 -15 12.800 c-9 -3 -13.800 -6.800 -15 -12.800 c2.600 -3.300 3.600 -7.200 1 -11.500z" fill="#fff" stroke="#2e2e2e" stroke-width="1.500" stroke-linejoin="round"/><text x="1433.0" y="482.7" font-size="15" text-anchor="middle" fill="#222" textLength="22.500" lengthAdjust="spacingAndGlyphs">101</text>
<path d="M1668.5 645.0 c3.300 2.300 6.600 2.300 10 0 c3.300 2.300 6.600 2.300 10 0 l4 3.200 c-2.600 4.300 -1.600 8.200 1 11.500 c-1.200 6 -6 9.800 -15 12.800 c-9 -3 -13.800 -6.800 -15 -12.800 c2.600 -3.300 3.600 -7.200 1 -11.500z" fill="#fff" stroke="#2e2e2e" stroke-width="1.500" stroke-linejoin="round"/><text x="1678.5" y="663.7" font-size="15" text-anchor="middle" fill="#222" textLength="22.500" lengthAdjust="spacingAndGlyphs">101</text>
<path d="M1757.2 842.0 c3.300 2.300 6.600 2.300 10 0 c3.300 2.300 6.600 2.300 10 0 l4 3.200 c-2.600 4.300 -1.600 8.200 1 11.500 c-1.200 6 -6 9.800 -15 12.800 c-9 -3 -13.800 -6.800 -15 -12.800 c2.600 -3.300 3.600 -7.200 1 -11.500z" fill="#fff" stroke="#2e2e2e" stroke-width="1.500" stroke-linejoin="round"/><text x="1767.2" y="860.7" font-size="15" text-anchor="middle" fill="#222" textLength="22.500" lengthAdjust="spacingAndGlyphs">101</text>
<path d="M1765.3 1013.5 c3.300 2.300 6.600 2.300 10 0 c3.300 2.300 6.600 2.300 10 0 l4 3.200 c-2.600 4.300 -1.600 8.200 1 11.500 c-1.200 6 -6 9.800 -15 12.800 c-9 -3 -13.800 -6.800 -15 -12.800 c2.600 -3.300 3.600 -7.200 1 -11.500z" fill="#fff" stroke="#2e2e2e" stroke-width="1.500" stroke-linejoin="round"/><text x="1775.3" y="1032.2" font-size="15" text-anchor="middle" fill="#222" textLength="22.500" lengthAdjust="spacingAndGlyphs">101</text>
<path d="M1796.0 864.2 h34 l1.500 2 c-1 2.500 -1.300 4.500 -1.300 6.500 c0 7 -6 12 -17.200 15 c-11.200 -3 -17.200 -8 -17.200 -15 c0 -2 -.3 -4 -1.300 -6.500z" fill="#2b62b8" stroke="#fff" stroke-width="1"/><path d="M1796.0 864.2 h34 l1.500 2 l-1 3.200 h-35 l-1 -3.200z" fill="#d8433c"/><text x="1813.0" y="883.0" font-size="14" font-weight="bold" text-anchor="middle" fill="#fff">280</text>
<path d="M1588.2 970.5 h34 l1.500 2 c-1 2.500 -1.300 4.500 -1.300 6.500 c0 7 -6 12 -17.200 15 c-11.200 -3 -17.200 -8 -17.200 -15 c0 -2 -.3 -4 -1.300 -6.500z" fill="#2b62b8" stroke="#fff" stroke-width="1"/><path d="M1588.2 970.5 h34 l1.500 2 l-1 3.200 h-35 l-1 -3.200z" fill="#d8433c"/><text x="1605.2" y="989.3" font-size="14" font-weight="bold" text-anchor="middle" fill="#fff">280</text>
<rect x="1433.3" y="911.3" width="25" height="20.500" rx="9" fill="#fff" stroke="#333" stroke-width="1.500"/><text x="1445.8" y="926.7" font-size="14.500" text-anchor="middle" fill="#222">1</text>
<path d="M1796.8 640.0 L1796.3 651.7 L1797.5 656.3 L1788.2 663.3 L1787.0 668.0 L1794.0 669.2 L1803.3 682.0 L1815.0 694.8 L1818.5 697.2 L1817.3 703.0 L1810.3 707.7 L1804.5 712.3 L1801.0 714.7 L1803.3 720.5 L1794.0 731.0 L1789.3 728.7 L1785.8 733.3 L1789.3 742.7 L1790.5 756.7 L1797.5 775.3 L1805.7 784.7 L1810.3 798.7 L1815.0 808.0 L1824.3 813.8 M1824.3 813.7 L1760.2 817.2 L1759.0 790.3 L1725.2 792.2 L1701.1 792.7 L1701.8 804.3 L1712.3 805.5 M1701.1 792.7 L1700.0 770.0 L1697.0 737.0 L1690.0 723.0 L1684.3 720.8 L1650.0 729.8 L1577.7 742.7 L1576.5 753.2 L1566.0 754.3 L1567.2 763.7 L1574.2 808.0 L1568.3 819.7 L1563.7 824.3 L1567.2 826.7 L1556.7 833.7 L1564.8 843.0 L1553.2 845.3 L1556.7 851.2 L1550.8 857.0 L1549.7 873.3 L1554.3 889.7 L1560.2 890.8 L1556.7 889.3 L1554.3 892.8 L1542.7 903.3 L1531.0 917.3 L1521.7 923.2 L1487.8 929.0 L1462.2 955.8 L1461.0 996.7 L1459.8 1029.3 L1444.7 1032.8" fill="none" stroke="#262626" stroke-width="4.700" stroke-linejoin="round" stroke-linecap="round"/>
<path d="M1804.5 706.5 C1802.0 696.8 1791.5 689.4 1791.5 679.1 A13.3 13.3 0 1 1 1817.5 679.1 C1817.5 689.4 1807.0 696.8 1804.5 706.5Z" fill="#e8463c" stroke="#fff" stroke-width="1.8" stroke-linejoin="round"/>
<path d="M1825.5 818.5 C1823.0 808.5 1812.5 800.9 1812.5 790.1 A13.3 13.3 0 1 1 1838.5 790.1 C1838.5 800.9 1828.0 808.5 1825.5 818.5Z" fill="#42ad7b" stroke="#fff" stroke-width="1.8" stroke-linejoin="round"/>
<path d="M1713.5 815.5 C1711.0 805.7 1700.5 798.3 1700.5 787.8 A13.3 13.3 0 1 1 1726.5 787.8 C1726.5 798.3 1716.0 805.7 1713.5 815.5Z" fill="#e8463c" stroke="#fff" stroke-width="1.8" stroke-linejoin="round"/><path d="M1713.5 792.3 l5.600 -6.200h-3v-5.800h-5.200v5.800h-3z" fill="#fff"/>
<path d="M1696.7 737.0 C1694.2 726.5 1683.7 718.5 1683.7 707.1 A13.3 13.3 0 1 1 1709.7 707.1 C1709.7 718.5 1699.2 726.5 1696.7 737.0Z" fill="#42ad7b" stroke="#fff" stroke-width="1.8" stroke-linejoin="round"/><path d="M1696.7 698.6 l5.6 6.200h-3v5.800h-5.200v-5.800h-3z" fill="#fff"/>
<path d="M1567.2 762.5 C1564.7 751.7 1554.2 743.6 1554.2 731.9 A13.3 13.3 0 1 1 1580.2 731.9 C1580.2 743.6 1569.7 751.7 1567.2 762.5Z" fill="#42ad7b" stroke="#fff" stroke-width="1.8" stroke-linejoin="round"/><path d="M1567.2 723.4 l5.6 6.200h-3v5.800h-5.200v-5.800h-3z" fill="#fff"/>
<path d="M1551.5 840.7 C1549.0 829.9 1538.5 821.8 1538.5 810.1 A13.3 13.3 0 1 1 1564.5 810.1 C1564.5 821.8 1554.0 829.9 1551.5 840.7Z" fill="#42ad7b" stroke="#fff" stroke-width="1.8" stroke-linejoin="round"/><path d="M1551.5 801.6 l5.6 6.200h-3v5.800h-5.200v-5.800h-3z" fill="#fff"/>
<path d="M1444.2 1034.0 C1441.7 1022.5 1431.2 1013.8 1431.2 1001.1 A13.3 13.3 0 1 1 1457.2 1001.1 C1457.2 1013.8 1446.7 1022.5 1444.2 1034.0Z" fill="#1f5fad" stroke="#fff" stroke-width="1.8" stroke-linejoin="round"/><path d="M1444.2 992.6 l5.6 6.200h-3v5.800h-5.200v-5.800h-3z" fill="#fff"/>
</svg>
<div class="t" style="left:6.5px;top:914.6px;font-size:29.5px;letter-spacing:-.55px;-webkit-text-stroke:.5px #fff;paint-order:stroke fill"><span style="color:#4285f4">G</span><span style="color:#ea4335">o</span><span style="color:#fbbc05">o</span><span style="color:#4285f4">g</span><span style="color:#34a853">l</span><span style="color:#ea4335">e</span></div>
<div class="abs" style="left:28.0px;top:931.7px;width:500px;height:19.5px;background:rgba(247,247,247,.72)"></div>
<div class="abs" style="left:8.0px;top:931.7px;width:20px;height:19.5px;background:linear-gradient(90deg,rgba(247,247,247,0),rgba(247,247,247,.72))"></div>
<div class="t" style="left:38.00px;top:934.02px;font-size:14.8px;letter-spacing:0.021px;color:#3a3a3a">Map Data</div>
<div class="t" style="left:120.50px;top:934.02px;font-size:14.8px;letter-spacing:0.374px;color:#3a3a3a">2 km</div>
<svg class="abs" style="left:158.5px;top:937.9px" width="98" height="10" viewBox="0 0 98 10"><path d="M1.200 0v8.300h95.600V0" fill="none" stroke="#444" stroke-width="2.200"/></svg>
<div class="t" style="left:275.50px;top:934.02px;font-size:14.8px;letter-spacing:0.140px;color:#3a3a3a">Terms of Use</div>
<div class="t" style="left:382.80px;top:934.02px;font-size:14.8px;letter-spacing:0.017px;color:#3a3a3a">Report a map error</div>
<div class="abs" style="left:460.0px;top:775.6px;width:42px;height:42px;background:#fff;border-radius:3px;box-shadow:0 1px 4px rgba(0,0,0,.3)"><svg width="42" height="42" viewBox="0 0 42 42"><circle cx="21" cy="11.300" r="4.300" fill="#f7b500"/><path d="M15.800 17.200c0-1.300 1-2 2.200-2l3 2.200 3-2.200c1.200 0 2.200.7 2.200 2l.9 8.600-1.900.5-.5 8.700h-2.500L21 29l-1.200 6h-2.500l-.5-8.700-1.900-.5z" fill="#f7b500"/><path d="M18.300 15.400l2.700 2 2.700-2" fill="none" stroke="#d99a00" stroke-width=".9"/></svg></div>
<div class="abs" style="left:460.0px;top:833.2px;width:42px;height:83.3px;background:#fff;border-radius:3px;box-shadow:0 1px 4px rgba(0,0,0,.3)"><svg width="42" height="84" viewBox="0 0 42 84"><path d="M14.200 21h15.600M22 13.200v15.600M14.200 63h15.600" stroke="#666" stroke-width="3.400" fill="none"/><path d="M6 41.600h30" stroke="#e6e6e6" stroke-width="1"/></svg></div>
<div class="abs" style="left:11.5px;top:15.8px;width:142.5px;height:50px;background:#fff;border-radius:3px;box-shadow:0 1px 4px rgba(0,0,0,.3)"><div class="abs" style="left:55.5px;top:0;width:1px;height:50px;background:#e6e6e6"></div><div class="t" style="left:11.50px;top:17.68px;font-size:16.5px;color:#111;font-weight:bold">Map</div><div class="t" style="left:69.50px;top:17.68px;font-size:16.5px;color:#555">Satellite</div></div>
<div class="abs" style="left:0;top:1.5px;width:518px;height:41.5px;background:rgba(255,255,255,.86)"></div>
<svg class="abs" style="left:37.6px;top:13.2px;fill:#2f6fbf" width="17.500" height="17.500" viewBox="0 0 24 24"><path d="M12 2C8.130 2 5 5.130 5 9c0 5.250 7 13 7 13s7-7.750 7-13c0-3.870-3.130-7-7-7zm0 9.500c-1.380 0-2.500-1.120-2.500-2.500s1.120-2.500 2.500-2.500 2.500 1.120 2.500 2.500-1.120 2.500-2.500 2.500z"/></svg>
<div class="t" style="left:60.50px;top:16.65px;font-size:17.6px;letter-spacing:-0.700px;color:#5b93d3">Jobs</div>
<svg class="abs" style="left:102.0px;top:22.7px" width="11" height="8" viewBox="0 0 11 8"><path d="M1 1.200l4.500 4.800L10 1.200" fill="none" stroke="#6fa0d8" stroke-width="2"/></svg>
<svg class="abs" style="left:140.2px;top:11.7px;fill:#2f6fbf" width="19" height="19" viewBox="0 0 24 24"><path d="M16 11c1.660 0 2.990-1.340 2.990-3S17.660 5 16 5c-1.660 0-3 1.340-3 3s1.340 3 3 3zm-8 0c1.660 0 2.990-1.340 2.990-3S9.660 5 8 5C6.340 5 5 6.340 5 8s1.340 3 3 3zm0 2c-2.330 0-7 1.170-7 3.500V19h14v-2.500c0-2.330-4.670-3.500-7-3.500zm8 0c-.29 0-.62.020-.97.050 1.160.84 1.970 1.970 1.970 3.450V19h6v-2.500c0-2.330-4.670-3.500-7-3.500z"/></svg>
<div class="t" style="left:164.70px;top:16.65px;font-size:17.6px;letter-spacing:-0.382px;color:#5b93d3">Teams</div>
<svg class="abs" style="left:223.0px;top:22.7px" width="11" height="8" viewBox="0 0 11 8"><path d="M1 1.200l4.500 4.800L10 1.200" fill="none" stroke="#6fa0d8" stroke-width="2"/></svg>
<svg class="abs" style="left:261.2px;top:12.7px;fill:#2f6fbf" width="19.500" height="19.500" viewBox="0 0 24 24"><path d="M18.920 6.010C18.720 5.420 18.160 5 17.500 5h-11c-.66 0-1.210.42-1.420 1.010L3 12v8c0 .55.45 1 1 1h1c.55 0 1-.45 1-1v-1h12v1c0 .55.45 1 1 1h1c.55 0 1-.45 1-1v-8l-2.080-5.990zM6.500 16c-.83 0-1.500-.67-1.500-1.500S5.670 13 6.500 13s1.500.67 1.500 1.500S7.330 16 6.500 16zm11 0c-.83 0-1.500-.67-1.500-1.500s.67-1.500 1.500-1.500 1.500.67 1.500 1.500-.67 1.500-1.500 1.500zM5 11l1.500-4.500h11L19 11H5z"/></svg>
<div class="t" style="left:284.80px;top:16.65px;font-size:17.6px;letter-spacing:-0.328px;color:#5b93d3">Tracks</div>
<svg class="abs" style="left:342.8px;top:22.7px" width="11" height="8" viewBox="0 0 11 8"><path d="M1 1.200l4.500 4.800L10 1.200" fill="none" stroke="#6fa0d8" stroke-width="2"/></svg>
<svg class="abs" style="left:381.4px;top:12.4px;fill:#2f6fbf" width="19" height="19" viewBox="0 0 24 24"><path d="M12 8c-2.210 0-4 1.790-4 4s1.790 4 4 4 4-1.790 4-4-1.790-4-4-4zm8.940 3c-.46-4.170-3.770-7.480-7.940-7.940V1h-2v2.060C6.830 3.520 3.520 6.830 3.060 11H1v2h2.060c.46 4.170 3.770 7.480 7.940 7.940V23h2v-2.060c4.170-.46 7.480-3.770 7.940-7.940H23v-2h-2.060zM12 19c-3.870 0-7-3.130-7-7s3.130-7 7-7 7 3.130 7 7-3.130 7-7 7z"/></svg>
<div class="t" style="left:405.40px;top:16.65px;font-size:17.6px;letter-spacing:-0.046px;color:#5b93d3">Locate</div>
<svg class="abs" style="left:466.2px;top:22.7px" width="11" height="8" viewBox="0 0 11 8"><path d="M1 1.200l4.500 4.800L10 1.200" fill="none" stroke="#6fa0d8" stroke-width="2"/></svg>
<svg class="abs" style="left:504.6px;top:12.4px;fill:#2f6fbf" width="19" height="19" viewBox="0 0 24 24"><path d="M11.990 18.540l-7.370-5.730L3 14.070l9 7 9-7-1.630-1.270-7.380 5.740zM12 16l7.360-5.730L21 9l-9-7-9 7 1.630 1.270L12 16z"/></svg>
</div>
<div class="abs" style="left:1367px;top:164.6px;width:533px;height:1.4px;background:#cfcfcf;border-top-right-radius:4px"></div>
<div class="abs" style="left:1502.5px;top:293.6px;width:388.8px;height:358.2px;background:#fff;border-radius:3px;box-shadow:0 1px 5px rgba(0,0,0,.38)"></div>
<svg class="abs" style="left:1680px;top:650.8px" width="36" height="38" viewBox="0 0 36 38"><path d="M3.700 .3L16.500 34.600 30 .3" fill="#fff" stroke="rgba(0,0,0,.2)" stroke-width="1"/><path d="M2.500 0h29v1.400h-29z" fill="#fff"/></svg>
<svg class="abs" style="left:1857px;top:310.5px" width="14" height="14" viewBox="0 0 14 14"><path d="M1 1l12 12M13 1L1 13" stroke="#8c8c8c" stroke-width="2.300"/></svg>
<div class="t" style="left:1523.20px;top:311.34px;font-size:18.8px;letter-spacing:-0.319px;color:#242424;font-weight:bold">Pickup</div>
<div class="t" style="left:1523.20px;top:341.94px;font-size:18.8px;letter-spacing:0.140px;color:#242424;font-weight:bold">Pickup (#6)</div>
<div class="t" style="left:1523.60px;top:401.74px;font-size:18.8px;letter-spacing:-0.321px;color:#505050;-webkit-text-stroke:.35px #fff">Place:</div>
<div class="t" style="left:1579.80px;top:401.74px;font-size:18.8px;letter-spacing:-0.437px;color:#242424;font-weight:bold">San Francisco</div>
<div class="t" style="left:1523.60px;top:432.14px;font-size:18.8px;letter-spacing:0.130px;color:#505050;-webkit-text-stroke:.35px #fff">Assigned to:</div>
<div class="t" style="left:1633.60px;top:432.14px;font-size:18.8px;letter-spacing:-0.265px;color:#242424;font-weight:bold">Driver 3</div>
<div class="t" style="left:1523.60px;top:462.34px;font-size:18.8px;letter-spacing:0.072px;color:#505050;-webkit-text-stroke:.35px #fff">Status:</div>
<div class="t" style="left:1588.20px;top:462.34px;font-size:18.8px;letter-spacing:-0.539px;color:#242424;font-weight:bold">Success</div>
<div class="t" style="left:1523.60px;top:492.99px;font-size:18.8px;letter-spacing:-0.076px;color:#505050;-webkit-text-stroke:.35px #fff">Scheduled:</div>
<div class="t" style="left:1622.70px;top:492.99px;font-size:18.8px;letter-spacing:0.327px;color:#242424;font-weight:bold">10 May 9:10am-9:20am</div>
<div class="t" style="left:1523.60px;top:553.84px;font-size:18.8px;letter-spacing:-0.014px;color:#505050;-webkit-text-stroke:.35px #fff">Product Code :</div>
<div class="t" style="left:1654.80px;top:553.84px;font-size:18.8px;letter-spacing:0.578px;color:#242424;font-weight:bold">336</div>
<div class="t" style="left:1523.60px;top:584.24px;font-size:18.8px;letter-spacing:-0.011px;color:#505050;-webkit-text-stroke:.35px #fff">Quantity Received:</div>
<div class="t" style="left:1687.30px;top:584.24px;font-size:18.8px;letter-spacing:0.673px;color:#242424;font-weight:bold">2255</div>
<div class="t" style="left:1523.60px;top:614.54px;font-size:18.8px;letter-spacing:0.016px;color:#505050;-webkit-text-stroke:.35px #fff">Contact :</div>
<div class="t" style="left:1605.40px;top:614.54px;font-size:18.8px;letter-spacing:-0.213px;color:#242424;font-weight:bold">Mike Logan</div>
<div class="abs" style="left:1691.3px;top:745.2px;width:240px;height:28.3px;background:#ececec;box-shadow:0 0 0 1px rgba(0,0,0,.1),0 1px 3px rgba(0,0,0,.25)"></div>
<div class="t" style="left:1700.00px;top:749.77px;font-size:16.4px;letter-spacing:0.569px;color:#1a1a1a">Pickup, San Francisco (#6)</div>
</body>
</html>
